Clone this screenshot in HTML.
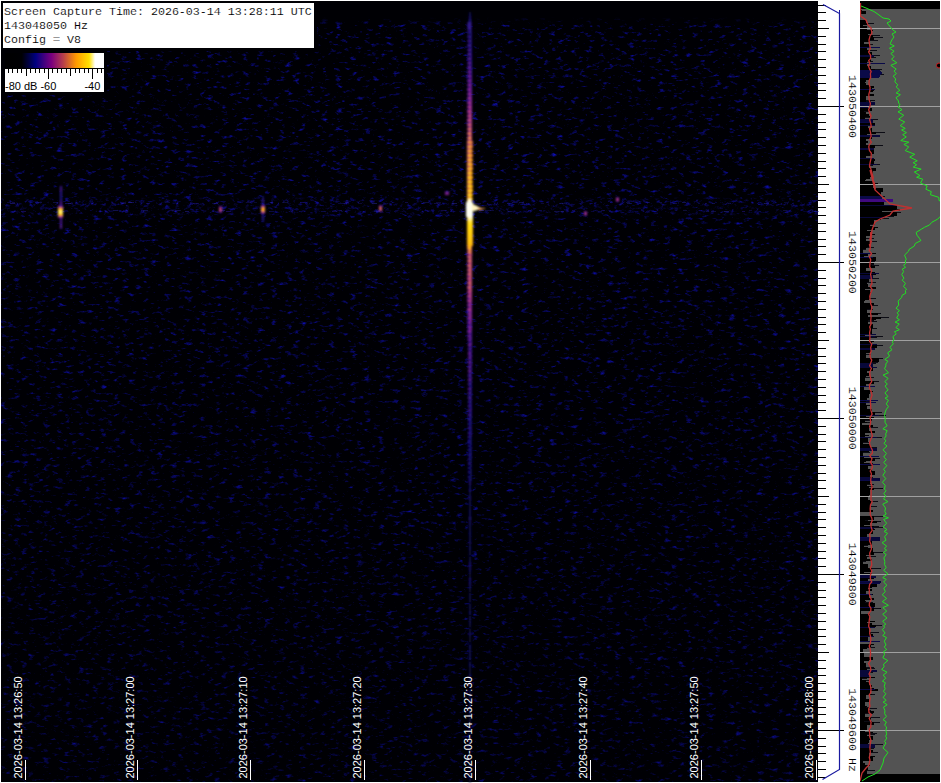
<!DOCTYPE html><html><head><meta charset="utf-8"><style>html,body{margin:0;padding:0;background:#fff;width:941px;height:783px;overflow:hidden}svg{display:block}text{white-space:pre}</style></head><body>
<svg width="941" height="783" viewBox="0 0 941 783" shape-rendering="crispEdges">
<defs>
<filter id="nz" filterUnits="userSpaceOnUse" x="1" y="1" width="817" height="781" color-interpolation-filters="sRGB"><feTurbulence type="fractalNoise" baseFrequency="0.14 0.28" numOctaves="3" seed="7" result="t"/><feColorMatrix in="t" type="matrix" values="0 0 0 0 0.06  0 0 0 0 0.06  0 0 0 0 0.78  1 0 0 0 0" result="c"/><feComponentTransfer in="c" result="d"><feFuncA type="linear" slope="2.8" intercept="-1.66"/></feComponentTransfer><feGaussianBlur in="d" stdDeviation="0.6"/></filter>
<linearGradient id="cb" x1="5" y1="0" x2="104" y2="0" gradientUnits="userSpaceOnUse"><stop offset="0" stop-color="#000"/><stop offset="0.17" stop-color="#000004"/><stop offset="0.31" stop-color="#000080"/><stop offset="0.47" stop-color="#7a007e"/><stop offset="0.59" stop-color="#b8404a"/><stop offset="0.72" stop-color="#ff9a00"/><stop offset="0.85" stop-color="#ffe000"/><stop offset="0.91" stop-color="#ffffff"/><stop offset="1" stop-color="#ffffff"/></linearGradient>
<linearGradient id="sig" x1="0" y1="12" x2="0" y2="782" gradientUnits="userSpaceOnUse">
<stop offset="0" stop-color="#10106a" stop-opacity="0.3"/>
<stop offset="0.04" stop-color="#2a1a9a" stop-opacity="0.8"/>
<stop offset="0.09" stop-color="#6a2aa8" stop-opacity="1"/>
<stop offset="0.14" stop-color="#b04a90" stop-opacity="1"/>
<stop offset="0.19" stop-color="#f08a40" stop-opacity="1"/>
<stop offset="0.23" stop-color="#ffb020" stop-opacity="1"/>
<stop offset="0.24" stop-color="#fff0c0" stop-opacity="1"/>
<stop offset="0.27" stop-color="#fff0c0" stop-opacity="1"/>
<stop offset="0.29" stop-color="#ffc030" stop-opacity="1"/>
<stop offset="0.31" stop-color="#f09a20" stop-opacity="1"/>
<stop offset="0.35" stop-color="#a04090" stop-opacity="1"/>
<stop offset="0.41" stop-color="#5a2aa0" stop-opacity="1"/>
<stop offset="0.53" stop-color="#3a20a0" stop-opacity="0.9"/>
<stop offset="0.66" stop-color="#20188a" stop-opacity="0.7"/>
<stop offset="1" stop-color="#161680" stop-opacity="0.5"/>
</linearGradient>
<radialGradient id="spot"><stop offset="0" stop-color="#ffe060"/><stop offset="0.35" stop-color="#f09020"/><stop offset="0.7" stop-color="#8030a0" stop-opacity="0.8"/><stop offset="1" stop-color="#302090" stop-opacity="0"/></radialGradient>
<radialGradient id="spot2"><stop offset="0" stop-color="#e07050"/><stop offset="0.5" stop-color="#7030a0"/><stop offset="1" stop-color="#302090" stop-opacity="0"/></radialGradient>
<filter id="bl1" x="-5%" y="-50%" width="110%" height="200%"><feGaussianBlur stdDeviation="0.6"/></filter>
<filter id="bl2" x="-50%" y="-5%" width="200%" height="110%"><feGaussianBlur stdDeviation="0.9"/></filter>
<filter id="nz2" filterUnits="userSpaceOnUse" x="1" y="197" width="817" height="19" color-interpolation-filters="sRGB"><feTurbulence type="fractalNoise" baseFrequency="0.2 0.3" numOctaves="3" seed="21" result="t"/><feColorMatrix in="t" type="matrix" values="0 0 0 0 0.1  0 0 0 0 0.08  0 0 0 0 0.8  1 0 0 0 0" result="c"/><feComponentTransfer in="c" result="d"><feFuncA type="linear" slope="3.0" intercept="-1.65"/></feComponentTransfer><feGaussianBlur in="d" stdDeviation="0.6"/></filter>
<linearGradient id="bandg" x1="0" y1="197" x2="0" y2="216" gradientUnits="userSpaceOnUse"><stop offset="0" stop-color="#fff" stop-opacity="0"/><stop offset="0.32" stop-color="#fff" stop-opacity="1"/><stop offset="0.55" stop-color="#fff" stop-opacity="0.3"/><stop offset="0.75" stop-color="#fff" stop-opacity="0.9"/><stop offset="1" stop-color="#fff" stop-opacity="0"/></linearGradient>
<mask id="bandmask" maskUnits="userSpaceOnUse" x="1" y="197" width="817" height="19"><rect x="1" y="197" width="817" height="19" fill="url(#bandg)"/></mask>
<linearGradient id="topfade" x1="0" y1="17" x2="0" y2="26" gradientUnits="userSpaceOnUse"><stop offset="0" stop-color="#000004" stop-opacity="1"/><stop offset="1" stop-color="#000004" stop-opacity="0"/></linearGradient>
<linearGradient id="nzg" x1="0" y1="1" x2="0" y2="782" gradientUnits="userSpaceOnUse"><stop offset="0" stop-color="#fff" stop-opacity="1"/><stop offset="0.25" stop-color="#fff" stop-opacity="0.95"/><stop offset="0.6" stop-color="#fff" stop-opacity="0.85"/><stop offset="1" stop-color="#fff" stop-opacity="0.7"/></linearGradient>
<mask id="nzmask" maskUnits="userSpaceOnUse" x="1" y="1" width="817" height="781"><rect x="1" y="1" width="817" height="781" fill="url(#nzg)"/></mask>
</defs>
<rect x="0" y="0" width="941" height="783" fill="#fff"/>
<rect x="1" y="1" width="817" height="781" fill="#000004"/>
<rect x="1" y="1" width="817" height="781" fill="#000" filter="url(#nz)" mask="url(#nzmask)"/>
<rect x="1" y="197" width="817" height="19" fill="#000" filter="url(#nz2)" mask="url(#bandmask)"/>
<g filter="url(#bl1)">
<rect x="340.13" y="210" width="2.04" height="1" fill="#2a20b0" opacity="0.48"/>
<rect x="220.98" y="210" width="3.74" height="1" fill="#2a2ab0" opacity="0.47"/>
<rect x="213.53" y="203" width="4.51" height="1" fill="#2a20b0" opacity="0.43"/>
<rect x="597.56" y="211" width="4.12" height="1" fill="#2020a0" opacity="0.38"/>
<rect x="121.59" y="203" width="4.88" height="1" fill="#2a20b0" opacity="0.33"/>
<rect x="374.49" y="211" width="2.11" height="1" fill="#2a2ab0" opacity="0.25"/>
<rect x="541.41" y="203" width="2.66" height="1" fill="#2a20b0" opacity="0.27"/>
<rect x="338.43" y="203" width="5.54" height="1" fill="#2020a0" opacity="0.34"/>
<rect x="782.58" y="210" width="4.38" height="1" fill="#2a2ab0" opacity="0.31"/>
<rect x="711.78" y="203" width="2.87" height="1" fill="#2a20b0" opacity="0.4"/>
<rect x="422.85" y="202" width="5.83" height="1" fill="#2a2ab0" opacity="0.33"/>
<rect x="704.74" y="203" width="2.04" height="1" fill="#2a20b0" opacity="0.38"/>
<rect x="128.78" y="202" width="3.3" height="1" fill="#2a2ab0" opacity="0.43"/>
<rect x="64.95" y="203" width="5.98" height="1" fill="#2a2ab0" opacity="0.44"/>
<rect x="300.35" y="202" width="4.71" height="1" fill="#2a20b0" opacity="0.41"/>
<rect x="12.25" y="211" width="3.97" height="1" fill="#2020a0" opacity="0.3"/>
<rect x="626.85" y="203" width="4.79" height="1" fill="#2a2ab0" opacity="0.37"/>
<rect x="727.5" y="203" width="3.34" height="1" fill="#2a2ab0" opacity="0.29"/>
<rect x="123.22" y="202" width="2.36" height="1" fill="#2a2ab0" opacity="0.25"/>
<rect x="404.8" y="202" width="2.74" height="1" fill="#2a20b0" opacity="0.38"/>
<rect x="331.6" y="211" width="5.16" height="1" fill="#2a20b0" opacity="0.3"/>
<rect x="749.01" y="210" width="2.74" height="1" fill="#2a20b0" opacity="0.29"/>
<rect x="145.77" y="203" width="4.29" height="1" fill="#2a20b0" opacity="0.38"/>
<rect x="340.87" y="211" width="2.48" height="1" fill="#2020a0" opacity="0.3"/>
<rect x="506.75" y="203" width="2.81" height="1" fill="#2020a0" opacity="0.47"/>
<rect x="269.85" y="202" width="3.17" height="1" fill="#2a20b0" opacity="0.44"/>
<rect x="36.85" y="202" width="5.2" height="1" fill="#2020a0" opacity="0.44"/>
<rect x="128.13" y="202" width="5.52" height="1" fill="#2a20b0" opacity="0.44"/>
<rect x="559.32" y="211" width="3.61" height="1" fill="#2020a0" opacity="0.32"/>
<rect x="601.1" y="210" width="3.92" height="1" fill="#2a20b0" opacity="0.26"/>
<rect x="281.89" y="202" width="5.68" height="1" fill="#2a2ab0" opacity="0.28"/>
<rect x="710.92" y="211" width="5.45" height="1" fill="#2a2ab0" opacity="0.32"/>
<rect x="170.76" y="210" width="3.2" height="1" fill="#2a20b0" opacity="0.27"/>
<rect x="245.89" y="202" width="5.14" height="1" fill="#2a20b0" opacity="0.3"/>
<rect x="67.63" y="203" width="5.27" height="1" fill="#2a20b0" opacity="0.36"/>
<rect x="12.28" y="202" width="2.45" height="1" fill="#2a20b0" opacity="0.35"/>
<rect x="706.32" y="211" width="2.97" height="1" fill="#2a2ab0" opacity="0.39"/>
<rect x="211.95" y="203" width="4.13" height="1" fill="#2020a0" opacity="0.32"/>
<rect x="698.01" y="203" width="2.37" height="1" fill="#2020a0" opacity="0.38"/>
<rect x="783.52" y="202" width="5.92" height="1" fill="#2020a0" opacity="0.29"/>
<rect x="433.74" y="203" width="4.35" height="1" fill="#2a20b0" opacity="0.35"/>
<rect x="21" y="211" width="4.65" height="1" fill="#2a20b0" opacity="0.42"/>
<rect x="441.3" y="210" width="4.38" height="1" fill="#2a20b0" opacity="0.36"/>
<rect x="260.68" y="210" width="3.56" height="1" fill="#2a2ab0" opacity="0.34"/>
<rect x="507.74" y="211" width="4.28" height="1" fill="#2a2ab0" opacity="0.27"/>
<rect x="142.73" y="210" width="5.76" height="1" fill="#2a2ab0" opacity="0.38"/>
<rect x="375.8" y="211" width="3.88" height="1" fill="#2a2ab0" opacity="0.48"/>
<rect x="269.23" y="211" width="5.14" height="1" fill="#2020a0" opacity="0.39"/>
<rect x="814.4" y="211" width="4.74" height="1" fill="#2a2ab0" opacity="0.48"/>
<rect x="451.71" y="203" width="5.72" height="1" fill="#2a2ab0" opacity="0.42"/>
<rect x="371.74" y="203" width="5.04" height="1" fill="#2a2ab0" opacity="0.45"/>
<rect x="626.19" y="202" width="4.24" height="1" fill="#2a2ab0" opacity="0.32"/>
<rect x="192.87" y="203" width="5.92" height="1" fill="#2a20b0" opacity="0.34"/>
<rect x="561.87" y="203" width="4.65" height="1" fill="#2020a0" opacity="0.36"/>
<rect x="682.39" y="202" width="4.02" height="1" fill="#2020a0" opacity="0.48"/>
<rect x="741.96" y="211" width="3.47" height="1" fill="#2a20b0" opacity="0.42"/>
<rect x="344.11" y="203" width="2.44" height="1" fill="#2a20b0" opacity="0.33"/>
<rect x="461.88" y="211" width="2.68" height="1" fill="#2a20b0" opacity="0.39"/>
<rect x="518.9" y="202" width="5.19" height="1" fill="#2020a0" opacity="0.43"/>
<rect x="225.89" y="211" width="5.23" height="1" fill="#2a20b0" opacity="0.42"/>
<rect x="165.12" y="202" width="4.5" height="1" fill="#2020a0" opacity="0.35"/>
<rect x="176.31" y="210" width="4.24" height="1" fill="#2a2ab0" opacity="0.27"/>
<rect x="647.21" y="202" width="3.01" height="1" fill="#2a2ab0" opacity="0.29"/>
<rect x="474.78" y="203" width="5.72" height="1" fill="#2a20b0" opacity="0.3"/>
<rect x="682.81" y="210" width="4.49" height="1" fill="#2a2ab0" opacity="0.3"/>
<rect x="321.16" y="211" width="4.73" height="1" fill="#2020a0" opacity="0.41"/>
<rect x="538.65" y="210" width="3.76" height="1" fill="#2020a0" opacity="0.32"/>
<rect x="60.53" y="211" width="3.91" height="1" fill="#2020a0" opacity="0.29"/>
<rect x="344.51" y="202" width="4.81" height="1" fill="#2a20b0" opacity="0.42"/>
<rect x="723.77" y="211" width="4.93" height="1" fill="#2a2ab0" opacity="0.5"/>
<rect x="561.35" y="211" width="2.48" height="1" fill="#2a2ab0" opacity="0.5"/>
<rect x="6.94" y="202" width="3.84" height="1" fill="#2a20b0" opacity="0.29"/>
<rect x="553.65" y="211" width="5.65" height="1" fill="#2a2ab0" opacity="0.33"/>
<rect x="511.59" y="202" width="3.26" height="1" fill="#2a20b0" opacity="0.31"/>
<rect x="489.84" y="210" width="3.83" height="1" fill="#2020a0" opacity="0.35"/>
<rect x="112.61" y="210" width="5.07" height="1" fill="#2020a0" opacity="0.46"/>
<rect x="673.46" y="203" width="3.19" height="1" fill="#2a20b0" opacity="0.36"/>
<rect x="10.07" y="203" width="5.02" height="1" fill="#2a20b0" opacity="0.49"/>
<rect x="184.5" y="211" width="4.03" height="1" fill="#2a20b0" opacity="0.46"/>
<rect x="485.47" y="210" width="5.52" height="1" fill="#2a2ab0" opacity="0.29"/>
<rect x="435.54" y="202" width="5.04" height="1" fill="#2a20b0" opacity="0.28"/>
<rect x="53.22" y="202" width="4.64" height="1" fill="#2a2ab0" opacity="0.33"/>
<rect x="479.36" y="210" width="4.61" height="1" fill="#2020a0" opacity="0.49"/>
<rect x="253.78" y="202" width="3.26" height="1" fill="#2020a0" opacity="0.28"/>
<rect x="357.67" y="203" width="4.57" height="1" fill="#2a20b0" opacity="0.27"/>
<rect x="558.54" y="203" width="4.69" height="1" fill="#2a2ab0" opacity="0.38"/>
<rect x="571.78" y="210" width="2.84" height="1" fill="#2a20b0" opacity="0.26"/>
<rect x="763.52" y="203" width="5.65" height="1" fill="#2020a0" opacity="0.49"/>
<rect x="659.25" y="202" width="2.56" height="1" fill="#2a2ab0" opacity="0.34"/>
<rect x="472.76" y="203" width="2.1" height="1" fill="#2020a0" opacity="0.38"/>
</g>
<rect x="1" y="1" width="817" height="16" fill="#000004"/>
<rect x="1" y="17" width="817" height="9" fill="url(#topfade)"/>
<g filter="url(#bl2)">
<rect x="468.5" y="12" width="2" height="1" fill="#0a0a3c"/>
<rect x="468.5" y="13" width="2" height="1" fill="#0c0b46"/>
<rect x="468.5" y="14" width="2" height="1" fill="#0f0c50"/>
<rect x="468.5" y="15" width="2" height="1" fill="#110d59"/>
<rect x="468.5" y="16" width="2" height="1" fill="#140f64"/>
<rect x="468.5" y="17" width="2" height="1" fill="#16106e"/>
<rect x="468.5" y="18" width="2" height="1" fill="#191178"/>
<rect x="468.5" y="19" width="2" height="1" fill="#1b1282"/>
<rect x="468.5" y="20" width="2" height="1" fill="#1e148c"/>
<rect x="468.5" y="21" width="2" height="1" fill="#1f148c"/>
<rect x="467" y="22" width="5" height="1" fill="#0a0a3f"/>
<rect x="468" y="22" width="3" height="1" fill="#2d158d"/>
<rect x="467" y="23" width="5" height="1" fill="#0b0a40"/>
<rect x="468" y="23" width="3" height="1" fill="#2e158d"/>
<rect x="467" y="24" width="5" height="1" fill="#0b0a42"/>
<rect x="468" y="24" width="3" height="1" fill="#30158d"/>
<rect x="467" y="25" width="5" height="1" fill="#0b0a43"/>
<rect x="468" y="25" width="3" height="1" fill="#31168e"/>
<rect x="467" y="26" width="5" height="1" fill="#0c0b45"/>
<rect x="468" y="26" width="3" height="1" fill="#32168e"/>
<rect x="467" y="27" width="5" height="1" fill="#0c0b47"/>
<rect x="468" y="27" width="3" height="1" fill="#34168e"/>
<rect x="467" y="28" width="5" height="1" fill="#0d0b48"/>
<rect x="468" y="28" width="3" height="1" fill="#35168e"/>
<rect x="467" y="29" width="5" height="1" fill="#0d0b4a"/>
<rect x="468" y="29" width="3" height="1" fill="#36168e"/>
<rect x="467.5" y="30" width="4" height="1" fill="#050520"/>
<rect x="469.5" y="30" width="2" height="1" fill="#0f0c53"/>
<rect x="467" y="31" width="5" height="1" fill="#090938"/>
<rect x="468" y="31" width="3" height="1" fill="#22148c"/>
<rect x="467" y="32" width="5" height="1" fill="#0e0c4d"/>
<rect x="468" y="32" width="3" height="1" fill="#39168e"/>
<rect x="467" y="33" width="5" height="1" fill="#07072f"/>
<rect x="469.5" y="33" width="2" height="1" fill="#191179"/>
<rect x="467.5" y="34" width="4" height="1" fill="#050520"/>
<rect x="469.5" y="34" width="2" height="1" fill="#0f0c52"/>
<rect x="467" y="35" width="5" height="1" fill="#080830"/>
<rect x="469.5" y="35" width="2" height="1" fill="#1a127d"/>
<rect x="467" y="36" width="5" height="1" fill="#0f0c53"/>
<rect x="468" y="36" width="3" height="1" fill="#3e178f"/>
<rect x="467" y="37" width="5" height="1" fill="#09093b"/>
<rect x="468" y="37" width="3" height="1" fill="#2a158d"/>
<rect x="467.5" y="38" width="4" height="1" fill="#060625"/>
<rect x="469.5" y="38" width="2" height="1" fill="#130e60"/>
<rect x="467.5" y="39" width="4" height="1" fill="#060629"/>
<rect x="469.5" y="39" width="2" height="1" fill="#150f6a"/>
<rect x="467" y="40" width="5" height="1" fill="#0d0b4b"/>
<rect x="468" y="40" width="3" height="1" fill="#37168e"/>
<rect x="467" y="41" width="5" height="1" fill="#100d55"/>
<rect x="468" y="41" width="3" height="1" fill="#40178f"/>
<rect x="467.5" y="42" width="4" height="1" fill="#07072f"/>
<rect x="469.5" y="42" width="2" height="1" fill="#19117b"/>
<rect x="467.5" y="43" width="4" height="1" fill="#060626"/>
<rect x="469.5" y="43" width="2" height="1" fill="#130e62"/>
<rect x="467" y="44" width="5" height="1" fill="#09093a"/>
<rect x="468" y="44" width="3" height="1" fill="#28158d"/>
<rect x="467" y="45" width="5" height="1" fill="#130e63"/>
<rect x="468" y="45" width="3" height="1" fill="#4b1890"/>
<rect x="467" y="46" width="5" height="1" fill="#0a0a3c"/>
<rect x="468" y="46" width="3" height="1" fill="#2b158d"/>
<rect x="467.5" y="47" width="4" height="1" fill="#060628"/>
<rect x="469.5" y="47" width="2" height="1" fill="#150f69"/>
<rect x="467.5" y="48" width="4" height="1" fill="#080833"/>
<rect x="469.5" y="48" width="2" height="1" fill="#1c1384"/>
<rect x="467" y="49" width="5" height="1" fill="#130e62"/>
<rect x="468" y="49" width="3" height="1" fill="#4a1890"/>
<rect x="467" y="50" width="5" height="1" fill="#110d5b"/>
<rect x="468" y="50" width="3" height="1" fill="#44178f"/>
<rect x="467.5" y="51" width="4" height="1" fill="#080830"/>
<rect x="469.5" y="51" width="2" height="1" fill="#1a127e"/>
<rect x="467.5" y="52" width="4" height="1" fill="#07072e"/>
<rect x="469.5" y="52" width="2" height="1" fill="#181176"/>
<rect x="467" y="53" width="5" height="1" fill="#100d54"/>
<rect x="468" y="53" width="3" height="1" fill="#3f178f"/>
<rect x="467" y="54" width="5" height="1" fill="#171070"/>
<rect x="468" y="54" width="3" height="1" fill="#551991"/>
<rect x="467" y="55" width="5" height="1" fill="#0a0a3d"/>
<rect x="469.5" y="55" width="2" height="1" fill="#2c158d"/>
<rect x="467.5" y="56" width="4" height="1" fill="#07072d"/>
<rect x="469.5" y="56" width="2" height="1" fill="#181175"/>
<rect x="467" y="57" width="5" height="1" fill="#0b0a40"/>
<rect x="469.5" y="57" width="2" height="1" fill="#2e158d"/>
<rect x="467" y="58" width="5" height="1" fill="#181176"/>
<rect x="468" y="58" width="3" height="1" fill="#5b1a92"/>
<rect x="467" y="59" width="5" height="1" fill="#120e5e"/>
<rect x="468" y="59" width="3" height="1" fill="#471890"/>
<rect x="467.5" y="60" width="4" height="1" fill="#080832"/>
<rect x="469.5" y="60" width="2" height="1" fill="#1b1283"/>
<rect x="467.5" y="61" width="4" height="1" fill="#090937"/>
<rect x="469.5" y="61" width="2" height="1" fill="#20148c"/>
<rect x="467" y="62" width="5" height="1" fill="#171070"/>
<rect x="468" y="62" width="3" height="1" fill="#561991"/>
<rect x="467" y="63" width="5" height="1" fill="#1a127c"/>
<rect x="468" y="63" width="3" height="1" fill="#5f1a92"/>
<rect x="467.5" y="64" width="4" height="1" fill="#0b0a42"/>
<rect x="469.5" y="64" width="2" height="1" fill="#30158d"/>
<rect x="467.5" y="65" width="4" height="1" fill="#080835"/>
<rect x="469.5" y="65" width="2" height="1" fill="#1d138b"/>
<rect x="467" y="66" width="5" height="1" fill="#130e62"/>
<rect x="468" y="66" width="3" height="1" fill="#4a1890"/>
<rect x="467" y="67" width="5" height="1" fill="#20148c"/>
<rect x="468" y="67" width="3" height="1" fill="#6e1c94"/>
<rect x="467" y="68" width="5" height="1" fill="#150f68"/>
<rect x="468" y="68" width="3" height="1" fill="#4f1991"/>
<rect x="467.5" y="69" width="4" height="1" fill="#090939"/>
<rect x="469.5" y="69" width="2" height="1" fill="#26148c"/>
<rect x="467.5" y="70" width="4" height="1" fill="#0f0c52"/>
<rect x="469.5" y="70" width="2" height="1" fill="#3d178f"/>
<rect x="467" y="71" width="5" height="1" fill="#22148c"/>
<rect x="468" y="71" width="3" height="1" fill="#711c94"/>
<rect x="467" y="72" width="5" height="1" fill="#1d138b"/>
<rect x="468" y="72" width="3" height="1" fill="#6b1b93"/>
<rect x="467.5" y="73" width="4" height="1" fill="#0e0c4f"/>
<rect x="469.5" y="73" width="2" height="1" fill="#3a168e"/>
<rect x="467.5" y="74" width="4" height="1" fill="#0d0b48"/>
<rect x="469.5" y="74" width="2" height="1" fill="#35168e"/>
<rect x="467" y="75" width="5" height="1" fill="#1c1387"/>
<rect x="468" y="75" width="3" height="1" fill="#691b93"/>
<rect x="467" y="76" width="5" height="1" fill="#32168e"/>
<rect x="468" y="76" width="3" height="1" fill="#801e95"/>
<rect x="467" y="77" width="5" height="1" fill="#171072"/>
<rect x="469.5" y="77" width="2" height="1" fill="#571991"/>
<rect x="467.5" y="78" width="4" height="1" fill="#0e0c4c"/>
<rect x="469.5" y="78" width="2" height="1" fill="#38168e"/>
<rect x="467" y="79" width="5" height="1" fill="#181177"/>
<rect x="469.5" y="79" width="2" height="1" fill="#5b1a92"/>
<rect x="467" y="80" width="5" height="1" fill="#3a168e"/>
<rect x="468" y="80" width="3" height="1" fill="#852192"/>
<rect x="467" y="81" width="5" height="1" fill="#27148c"/>
<rect x="468" y="81" width="3" height="1" fill="#761c94"/>
<rect x="467.5" y="82" width="4" height="1" fill="#120e5e"/>
<rect x="469.5" y="82" width="2" height="1" fill="#471890"/>
<rect x="467.5" y="83" width="4" height="1" fill="#150f69"/>
<rect x="469.5" y="83" width="2" height="1" fill="#501991"/>
<rect x="467" y="84" width="5" height="1" fill="#37168e"/>
<rect x="468" y="84" width="3" height="1" fill="#832093"/>
<rect x="467" y="85" width="5" height="1" fill="#41178f"/>
<rect x="468" y="85" width="3" height="1" fill="#89248f"/>
<rect x="467.5" y="86" width="4" height="1" fill="#1a127d"/>
<rect x="469.5" y="86" width="2" height="1" fill="#601a92"/>
<rect x="467.5" y="87" width="4" height="1" fill="#140f65"/>
<rect x="469.5" y="87" width="2" height="1" fill="#4d1890"/>
<rect x="467" y="88" width="5" height="1" fill="#2c158d"/>
<rect x="468" y="88" width="3" height="1" fill="#7a1d95"/>
<rect x="467" y="89" width="5" height="1" fill="#501991"/>
<rect x="468" y="89" width="3" height="1" fill="#932a89"/>
<rect x="467" y="90" width="5" height="1" fill="#30158d"/>
<rect x="468" y="90" width="3" height="1" fill="#7f1d95"/>
<rect x="467.5" y="91" width="4" height="1" fill="#171071"/>
<rect x="469.5" y="91" width="2" height="1" fill="#561991"/>
<rect x="467.5" y="92" width="4" height="1" fill="#20148c"/>
<rect x="469.5" y="92" width="2" height="1" fill="#6f1c94"/>
<rect x="467" y="93" width="5" height="1" fill="#551991"/>
<rect x="468" y="93" width="3" height="1" fill="#962c87"/>
<rect x="467" y="94" width="5" height="1" fill="#501991"/>
<rect x="468" y="94" width="3" height="1" fill="#932a89"/>
<rect x="467.5" y="95" width="4" height="1" fill="#20148c"/>
<rect x="469.5" y="95" width="2" height="1" fill="#6f1c94"/>
<rect x="467.5" y="96" width="4" height="1" fill="#1d138a"/>
<rect x="469.5" y="96" width="2" height="1" fill="#6a1b93"/>
<rect x="467" y="97" width="5" height="1" fill="#501991"/>
<rect x="468" y="97" width="3" height="1" fill="#932a89"/>
<rect x="467" y="98" width="5" height="1" fill="#691b93"/>
<rect x="468" y="98" width="3" height="1" fill="#a3347f"/>
<rect x="467" y="99" width="5" height="1" fill="#40178f"/>
<rect x="469.5" y="99" width="2" height="1" fill="#89248f"/>
<rect x="467.5" y="100" width="4" height="1" fill="#22148c"/>
<rect x="469.5" y="100" width="2" height="1" fill="#701c94"/>
<rect x="467" y="101" width="5" height="1" fill="#471890"/>
<rect x="469.5" y="101" width="2" height="1" fill="#8d268d"/>
<rect x="467" y="102" width="5" height="1" fill="#751c94"/>
<rect x="468" y="102" width="3" height="1" fill="#aa397a"/>
<rect x="467" y="103" width="5" height="1" fill="#621b93"/>
<rect x="468" y="103" width="3" height="1" fill="#9f3281"/>
<rect x="467.5" y="104" width="4" height="1" fill="#34168e"/>
<rect x="469.5" y="104" width="2" height="1" fill="#821f94"/>
<rect x="467.5" y="105" width="4" height="1" fill="#3f178f"/>
<rect x="469.5" y="105" width="2" height="1" fill="#882390"/>
<rect x="467" y="106" width="5" height="1" fill="#751c94"/>
<rect x="468" y="106" width="3" height="1" fill="#aa397a"/>
<rect x="467" y="107" width="5" height="1" fill="#7f1d95"/>
<rect x="468" y="107" width="3" height="1" fill="#b13d76"/>
<rect x="467.5" y="108" width="4" height="1" fill="#511991"/>
<rect x="469.5" y="108" width="2" height="1" fill="#942b88"/>
<rect x="467.5" y="109" width="4" height="1" fill="#3f178f"/>
<rect x="469.5" y="109" width="2" height="1" fill="#882390"/>
<rect x="467" y="110" width="5" height="1" fill="#6d1c94"/>
<rect x="468" y="110" width="3" height="1" fill="#a5367d"/>
<rect x="467" y="111" width="5" height="1" fill="#8b258e"/>
<rect x="468" y="111" width="3" height="1" fill="#bd456e"/>
<rect x="467" y="112" width="5" height="1" fill="#731c94"/>
<rect x="468" y="112" width="3" height="1" fill="#a9387b"/>
<rect x="467.5" y="113" width="4" height="1" fill="#4b1890"/>
<rect x="469.5" y="113" width="2" height="1" fill="#90288b"/>
<rect x="467.5" y="114" width="4" height="1" fill="#631b93"/>
<rect x="469.5" y="114" width="2" height="1" fill="#9f3281"/>
<rect x="467" y="115" width="5" height="1" fill="#8f278c"/>
<rect x="468" y="115" width="3" height="1" fill="#c14a68"/>
<rect x="467" y="116" width="5" height="1" fill="#8c268d"/>
<rect x="468" y="116" width="3" height="1" fill="#be466d"/>
<rect x="467.5" y="117" width="4" height="1" fill="#631b93"/>
<rect x="469.5" y="117" width="2" height="1" fill="#9f3281"/>
<rect x="467.5" y="118" width="4" height="1" fill="#5f1a92"/>
<rect x="469.5" y="118" width="2" height="1" fill="#9d3083"/>
<rect x="467" y="119" width="5" height="1" fill="#8c268d"/>
<rect x="468" y="119" width="3" height="1" fill="#be466d"/>
<rect x="467" y="120" width="5" height="1" fill="#9b2f84"/>
<rect x="468" y="120" width="3" height="1" fill="#d05e52"/>
<rect x="467" y="121" width="5" height="1" fill="#751c94"/>
<rect x="469.5" y="121" width="2" height="1" fill="#ab397a"/>
<rect x="467.5" y="122" width="4" height="1" fill="#4c1890"/>
<rect x="469.5" y="122" width="2" height="1" fill="#91288b"/>
<rect x="467" y="123" width="5" height="1" fill="#7d1d95"/>
<rect x="469.5" y="123" width="2" height="1" fill="#af3c77"/>
<rect x="467" y="124" width="5" height="1" fill="#a4357e"/>
<rect x="468" y="124" width="3" height="1" fill="#db6d41"/>
<rect x="467" y="125" width="5" height="1" fill="#952b88"/>
<rect x="468" y="125" width="3" height="1" fill="#c8545e"/>
<rect x="467.5" y="126" width="4" height="1" fill="#631b93"/>
<rect x="469.5" y="126" width="2" height="1" fill="#9f3281"/>
<rect x="467.5" y="127" width="4" height="1" fill="#701c94"/>
<rect x="469.5" y="127" width="2" height="1" fill="#a8377c"/>
<rect x="467" y="128" width="5" height="1" fill="#a4357e"/>
<rect x="468" y="128" width="3" height="1" fill="#da6c43"/>
<rect x="467" y="129" width="5" height="1" fill="#ac3a79"/>
<rect x="468" y="129" width="3" height="1" fill="#e47933"/>
<rect x="467.5" y="130" width="4" height="1" fill="#852192"/>
<rect x="469.5" y="130" width="2" height="1" fill="#b64172"/>
<rect x="467.5" y="131" width="4" height="1" fill="#6f1c94"/>
<rect x="469.5" y="131" width="2" height="1" fill="#a7377c"/>
<rect x="467" y="132" width="5" height="1" fill="#9c3083"/>
<rect x="468" y="132" width="3" height="1" fill="#d15f51"/>
<rect x="467" y="133" width="5" height="1" fill="#bb446f"/>
<rect x="468" y="133" width="3" height="1" fill="#f69119"/>
<rect x="467" y="134" width="5" height="1" fill="#a03380"/>
<rect x="468" y="134" width="3" height="1" fill="#d66748"/>
<rect x="467.5" y="135" width="4" height="1" fill="#7e1d95"/>
<rect x="469.5" y="135" width="2" height="1" fill="#b03d76"/>
<rect x="467.5" y="136" width="4" height="1" fill="#932a89"/>
<rect x="469.5" y="136" width="2" height="1" fill="#c65061"/>
<rect x="467" y="137" width="5" height="1" fill="#bf476c"/>
<rect x="468" y="137" width="3" height="1" fill="#fa9713"/>
<rect x="467" y="138" width="5" height="1" fill="#bb446f"/>
<rect x="468" y="138" width="3" height="1" fill="#f69119"/>
<rect x="467.5" y="139" width="4" height="1" fill="#92298a"/>
<rect x="469.5" y="139" width="2" height="1" fill="#c54f63"/>
<rect x="467" y="140" width="5" height="1" fill="#9e3182"/>
<rect x="469.5" y="140" width="2" height="1" fill="#c0496a"/>
<rect x="466.5" y="141" width="6" height="1" fill="#cd5a56"/>
<rect x="468" y="141" width="3" height="1" fill="#f58f1a"/>
<rect x="466.5" y="142" width="6" height="1" fill="#e57b32"/>
<rect x="468" y="142" width="3" height="1" fill="#fbab10"/>
<rect x="466.5" y="143" width="6" height="1" fill="#bc456e"/>
<rect x="469.5" y="143" width="2" height="1" fill="#e47933"/>
<rect x="467" y="144" width="5" height="1" fill="#a2347f"/>
<rect x="469.5" y="144" width="2" height="1" fill="#c54f63"/>
<rect x="466.5" y="145" width="6" height="1" fill="#c24b67"/>
<rect x="469.5" y="145" width="2" height="1" fill="#ea812b"/>
<rect x="466.5" y="146" width="6" height="1" fill="#ef8823"/>
<rect x="468" y="146" width="3" height="1" fill="#fcb50f"/>
<rect x="466.5" y="147" width="6" height="1" fill="#da6c42"/>
<rect x="468" y="147" width="3" height="1" fill="#fa9f12"/>
<rect x="467" y="148" width="5" height="1" fill="#ad3b78"/>
<rect x="469.5" y="148" width="2" height="1" fill="#d16050"/>
<rect x="467" y="149" width="5" height="1" fill="#b43f74"/>
<rect x="469.5" y="149" width="2" height="1" fill="#da6b43"/>
<rect x="466.5" y="150" width="6" height="1" fill="#e87e2e"/>
<rect x="468" y="150" width="3" height="1" fill="#fbad10"/>
<rect x="466.5" y="151" width="6" height="1" fill="#f08922"/>
<rect x="468" y="151" width="3" height="1" fill="#fcb70f"/>
<rect x="467" y="152" width="5" height="1" fill="#bf486b"/>
<rect x="469.5" y="152" width="2" height="1" fill="#e77d2f"/>
<rect x="467" y="153" width="5" height="1" fill="#ae3b78"/>
<rect x="469.5" y="153" width="2" height="1" fill="#d2614e"/>
<rect x="466.5" y="154" width="6" height="1" fill="#d86846"/>
<rect x="468" y="154" width="3" height="1" fill="#fa9c13"/>
<rect x="466.5" y="155" width="6" height="1" fill="#fa9713"/>
<rect x="468" y="155" width="3" height="1" fill="#fdc20d"/>
<rect x="466.5" y="156" width="6" height="1" fill="#da6c43"/>
<rect x="468" y="156" width="3" height="1" fill="#fa9f12"/>
<rect x="467" y="157" width="5" height="1" fill="#b23e75"/>
<rect x="469.5" y="157" width="2" height="1" fill="#d76847"/>
<rect x="467" y="158" width="5" height="1" fill="#c65161"/>
<rect x="469.5" y="158" width="2" height="1" fill="#ee8625"/>
<rect x="466.5" y="159" width="6" height="1" fill="#f99514"/>
<rect x="468" y="159" width="3" height="1" fill="#fdc10d"/>
<rect x="466.5" y="160" width="6" height="1" fill="#f38d1d"/>
<rect x="468" y="160" width="3" height="1" fill="#fcba0e"/>
<rect x="467" y="161" width="5" height="1" fill="#c0496a"/>
<rect x="469.5" y="161" width="2" height="1" fill="#e87e2e"/>
<rect x="467" y="162" width="5" height="1" fill="#ba4370"/>
<rect x="469.5" y="162" width="2" height="1" fill="#e27637"/>
<rect x="466.5" y="163" width="6" height="1" fill="#ed8526"/>
<rect x="468" y="163" width="3" height="1" fill="#fcb30f"/>
<rect x="466.5" y="164" width="6" height="1" fill="#faa112"/>
<rect x="468" y="164" width="3" height="1" fill="#fdcc0c"/>
<rect x="466.5" y="165" width="6" height="1" fill="#d96a44"/>
<rect x="469.5" y="165" width="2" height="1" fill="#fa9e12"/>
<rect x="467" y="166" width="5" height="1" fill="#b94370"/>
<rect x="469.5" y="166" width="2" height="1" fill="#e0733a"/>
<rect x="466.5" y="167" width="6" height="1" fill="#db6d41"/>
<rect x="469.5" y="167" width="2" height="1" fill="#faa012"/>
<rect x="466.5" y="168" width="6" height="1" fill="#fba611"/>
<rect x="468" y="168" width="3" height="1" fill="#fed10b"/>
<rect x="466.5" y="169" width="6" height="1" fill="#f48e1c"/>
<rect x="468" y="169" width="3" height="1" fill="#fcbb0e"/>
<rect x="467" y="170" width="5" height="1" fill="#c34d65"/>
<rect x="469.5" y="170" width="2" height="1" fill="#eb8229"/>
<rect x="467" y="171" width="5" height="1" fill="#cc5858"/>
<rect x="469.5" y="171" width="2" height="1" fill="#f48e1c"/>
<rect x="466.5" y="172" width="6" height="1" fill="#fa9e12"/>
<rect x="468" y="172" width="3" height="1" fill="#fdc90c"/>
<rect x="466.5" y="173" width="6" height="1" fill="#fba711"/>
<rect x="468" y="173" width="3" height="1" fill="#fed20b"/>
<rect x="467" y="174" width="5" height="1" fill="#d96a45"/>
<rect x="469.5" y="174" width="2" height="1" fill="#fa9d12"/>
<rect x="467" y="175" width="5" height="1" fill="#c44e64"/>
<rect x="469.5" y="175" width="2" height="1" fill="#ec8428"/>
<rect x="466.5" y="176" width="6" height="1" fill="#f18a20"/>
<rect x="468" y="176" width="3" height="1" fill="#fcb70f"/>
<rect x="466.5" y="177" width="6" height="1" fill="#fcb20f"/>
<rect x="468" y="177" width="3" height="1" fill="#ffdd10"/>
<rect x="466.5" y="178" width="6" height="1" fill="#f28c1e"/>
<rect x="468" y="178" width="3" height="1" fill="#fcb90e"/>
<rect x="467" y="179" width="5" height="1" fill="#c7525f"/>
<rect x="469.5" y="179" width="2" height="1" fill="#ef8823"/>
<rect x="467" y="180" width="5" height="1" fill="#de703d"/>
<rect x="469.5" y="180" width="2" height="1" fill="#faa312"/>
<rect x="466.5" y="181" width="6" height="1" fill="#fbae10"/>
<rect x="468" y="181" width="3" height="1" fill="#feda0a"/>
<rect x="466.5" y="182" width="6" height="1" fill="#fba711"/>
<rect x="468" y="182" width="3" height="1" fill="#fed20b"/>
<rect x="467" y="183" width="5" height="1" fill="#d66748"/>
<rect x="469.5" y="183" width="2" height="1" fill="#fa9b13"/>
<rect x="467" y="184" width="5" height="1" fill="#d05e52"/>
<rect x="469.5" y="184" width="2" height="1" fill="#f89316"/>
<rect x="466.5" y="185" width="6" height="1" fill="#fa9f12"/>
<rect x="468" y="185" width="3" height="1" fill="#fdca0c"/>
<rect x="466.5" y="186" width="6" height="1" fill="#fcb80f"/>
<rect x="468" y="186" width="3" height="1" fill="#ffe028"/>
<rect x="466.5" y="187" width="6" height="1" fill="#ee8625"/>
<rect x="469.5" y="187" width="2" height="1" fill="#fcb40f"/>
<rect x="467" y="188" width="5" height="1" fill="#cc5957"/>
<rect x="469.5" y="188" width="2" height="1" fill="#f48e1b"/>
<rect x="466.5" y="189" width="6" height="1" fill="#ef8823"/>
<rect x="469.5" y="189" width="2" height="1" fill="#fcb60f"/>
<rect x="466.5" y="190" width="6" height="1" fill="#fcbb0e"/>
<rect x="468" y="190" width="3" height="1" fill="#ffe236"/>
<rect x="466.5" y="191" width="6" height="1" fill="#fba411"/>
<rect x="468" y="191" width="3" height="1" fill="#fecf0b"/>
<rect x="467" y="192" width="5" height="1" fill="#d66649"/>
<rect x="469.5" y="192" width="2" height="1" fill="#fa9a13"/>
<rect x="467" y="193" width="5" height="1" fill="#de713d"/>
<rect x="469.5" y="193" width="2" height="1" fill="#faa312"/>
<rect x="466.5" y="194" width="6" height="1" fill="#fbb110"/>
<rect x="468" y="194" width="3" height="1" fill="#ffdc0c"/>
<rect x="466.5" y="195" width="6" height="1" fill="#fcba0e"/>
<rect x="468" y="195" width="3" height="1" fill="#ffe231"/>
<rect x="467" y="196" width="5" height="1" fill="#ef8823"/>
<rect x="469.5" y="196" width="2" height="1" fill="#fcb60f"/>
<rect x="467" y="197" width="5" height="1" fill="#e0733a"/>
<rect x="469.5" y="197" width="2" height="1" fill="#fba511"/>
<rect x="466.5" y="198" width="6" height="1" fill="#fbb010"/>
<rect x="468" y="198" width="3" height="1" fill="#fedb0a"/>
<rect x="466.5" y="199" width="6" height="1" fill="#ffdc0d"/>
<rect x="468" y="199" width="3" height="1" fill="#fff8c5"/>
<rect x="467" y="200" width="5" height="1" fill="#fece0b"/>
<rect x="468" y="200" width="3" height="1" fill="#fffde2"/>
<rect x="467" y="201" width="5" height="1" fill="#fed50a"/>
<rect x="468" y="201" width="3" height="1" fill="#fffff2"/>
<rect x="466" y="202" width="7" height="1" fill="#fffff0"/>
<rect x="466" y="203" width="7" height="1" fill="#fffff0"/>
<rect x="466" y="204" width="7" height="1" fill="#fffff0"/>
<rect x="466" y="205" width="7" height="1" fill="#fffff0"/>
<rect x="466" y="206" width="7" height="1" fill="#fffff0"/>
<rect x="466" y="207" width="7" height="1" fill="#fffff0"/>
<rect x="466" y="208" width="7" height="1" fill="#fffff0"/>
<rect x="466" y="209" width="7" height="1" fill="#fffff0"/>
<rect x="466" y="210" width="7" height="1" fill="#fffff0"/>
<rect x="466" y="211" width="7" height="1" fill="#fffff0"/>
<rect x="466" y="212" width="7" height="1" fill="#fffff0"/>
<rect x="466" y="213" width="7" height="1" fill="#fffff0"/>
<rect x="466" y="214" width="7" height="1" fill="#fffff0"/>
<rect x="466" y="215" width="7" height="1" fill="#fffff0"/>
<rect x="466" y="216" width="7" height="1" fill="#fffff0"/>
<rect x="466.5" y="217" width="6" height="1" fill="#ffe85a"/>
<rect x="467.5" y="217" width="4" height="1" fill="#fff9cd"/>
<rect x="466.5" y="218" width="6" height="1" fill="#ffe237"/>
<rect x="467.5" y="218" width="4" height="1" fill="#fff4aa"/>
<rect x="466.5" y="219" width="6" height="1" fill="#ffdd15"/>
<rect x="467.5" y="219" width="4" height="1" fill="#ffef88"/>
<rect x="466.5" y="220" width="6" height="1" fill="#fed60a"/>
<rect x="467.5" y="220" width="4" height="1" fill="#ffea66"/>
<rect x="466.5" y="221" width="6" height="1" fill="#fece0b"/>
<rect x="467.5" y="221" width="4" height="1" fill="#ffe443"/>
<rect x="466.5" y="222" width="6" height="1" fill="#fdc60d"/>
<rect x="467.5" y="222" width="4" height="1" fill="#ffdf21"/>
<rect x="466.5" y="223" width="6" height="1" fill="#fdc40d"/>
<rect x="467.5" y="223" width="4" height="1" fill="#ffde1a"/>
<rect x="466.5" y="224" width="6" height="1" fill="#fdc30d"/>
<rect x="467.5" y="224" width="4" height="1" fill="#ffdd13"/>
<rect x="466.5" y="225" width="6" height="1" fill="#fdc10d"/>
<rect x="467.5" y="225" width="4" height="1" fill="#ffdc0d"/>
<rect x="466.5" y="226" width="6" height="1" fill="#fdc00d"/>
<rect x="467.5" y="226" width="4" height="1" fill="#fedb0a"/>
<rect x="466.5" y="227" width="6" height="1" fill="#fcbe0e"/>
<rect x="467.5" y="227" width="4" height="1" fill="#fed90a"/>
<rect x="466.5" y="228" width="6" height="1" fill="#fcbd0e"/>
<rect x="467.5" y="228" width="4" height="1" fill="#fed80a"/>
<rect x="466.5" y="229" width="6" height="1" fill="#fcbb0e"/>
<rect x="467.5" y="229" width="4" height="1" fill="#fed60a"/>
<rect x="466.5" y="230" width="6" height="1" fill="#fcba0e"/>
<rect x="467.5" y="230" width="4" height="1" fill="#fed50a"/>
<rect x="466.5" y="231" width="6" height="1" fill="#fcb80f"/>
<rect x="467.5" y="231" width="4" height="1" fill="#fed30b"/>
<rect x="466.5" y="232" width="6" height="1" fill="#fcb70f"/>
<rect x="467.5" y="232" width="4" height="1" fill="#fed20b"/>
<rect x="466.5" y="233" width="6" height="1" fill="#fcb50f"/>
<rect x="467.5" y="233" width="4" height="1" fill="#fed00b"/>
<rect x="466.5" y="234" width="6" height="1" fill="#fcb40f"/>
<rect x="467.5" y="234" width="4" height="1" fill="#fece0b"/>
<rect x="466.5" y="235" width="6" height="1" fill="#fcb20f"/>
<rect x="467.5" y="235" width="4" height="1" fill="#fdcd0c"/>
<rect x="466.5" y="236" width="6" height="1" fill="#fbb010"/>
<rect x="467.5" y="236" width="4" height="1" fill="#fdcb0c"/>
<rect x="466.5" y="237" width="6" height="1" fill="#fbaf10"/>
<rect x="467.5" y="237" width="4" height="1" fill="#fdca0c"/>
<rect x="466.5" y="238" width="6" height="1" fill="#fbad10"/>
<rect x="467.5" y="238" width="4" height="1" fill="#fdc80c"/>
<rect x="466.5" y="239" width="6" height="1" fill="#fbac10"/>
<rect x="467.5" y="239" width="4" height="1" fill="#fdc70c"/>
<rect x="466.5" y="240" width="6" height="1" fill="#fbaa11"/>
<rect x="467.5" y="240" width="4" height="1" fill="#fdc50d"/>
<rect x="466.5" y="241" width="6" height="1" fill="#fba911"/>
<rect x="467.5" y="241" width="4" height="1" fill="#fdc40d"/>
<rect x="466.5" y="242" width="6" height="1" fill="#fba711"/>
<rect x="467.5" y="242" width="4" height="1" fill="#fdc20d"/>
<rect x="466.5" y="243" width="6" height="1" fill="#fba611"/>
<rect x="467.5" y="243" width="4" height="1" fill="#fdc10d"/>
<rect x="466.5" y="244" width="6" height="1" fill="#fa9f12"/>
<rect x="467.5" y="244" width="4" height="1" fill="#fcba0e"/>
<rect x="466.5" y="245" width="6" height="1" fill="#fa9913"/>
<rect x="467.5" y="245" width="4" height="1" fill="#fcb40f"/>
<rect x="467" y="246" width="5" height="1" fill="#de703d"/>
<rect x="468" y="246" width="3" height="1" fill="#fcb80f"/>
<rect x="467" y="247" width="5" height="1" fill="#d86846"/>
<rect x="468" y="247" width="3" height="1" fill="#fcb20f"/>
<rect x="467" y="248" width="5" height="1" fill="#d2604f"/>
<rect x="468" y="248" width="3" height="1" fill="#fbab10"/>
<rect x="467" y="249" width="5" height="1" fill="#cd5a57"/>
<rect x="468" y="249" width="3" height="1" fill="#fba611"/>
<rect x="467.5" y="250" width="4" height="1" fill="#ab3a79"/>
<rect x="469.5" y="250" width="2" height="1" fill="#e37835"/>
<rect x="467" y="251" width="5" height="1" fill="#a9387b"/>
<rect x="468" y="251" width="3" height="1" fill="#e17538"/>
<rect x="467" y="252" width="5" height="1" fill="#c54f63"/>
<rect x="468" y="252" width="3" height="1" fill="#fa9d12"/>
<rect x="467" y="253" width="5" height="1" fill="#a03281"/>
<rect x="469.5" y="253" width="2" height="1" fill="#d66649"/>
<rect x="467.5" y="254" width="4" height="1" fill="#862291"/>
<rect x="469.5" y="254" width="2" height="1" fill="#b84271"/>
<rect x="467" y="255" width="5" height="1" fill="#91298a"/>
<rect x="469.5" y="255" width="2" height="1" fill="#c44e64"/>
<rect x="467" y="256" width="5" height="1" fill="#9a2f84"/>
<rect x="468" y="256" width="3" height="1" fill="#cf5c54"/>
<rect x="467" y="257" width="5" height="1" fill="#ac3a79"/>
<rect x="468" y="257" width="3" height="1" fill="#e47934"/>
<rect x="467.5" y="258" width="4" height="1" fill="#821f94"/>
<rect x="469.5" y="258" width="2" height="1" fill="#b33f74"/>
<rect x="467.5" y="259" width="4" height="1" fill="#8c258e"/>
<rect x="469.5" y="259" width="2" height="1" fill="#bd456e"/>
<rect x="467" y="260" width="5" height="1" fill="#b23e75"/>
<rect x="468" y="260" width="3" height="1" fill="#ec8328"/>
<rect x="467" y="261" width="5" height="1" fill="#9f3281"/>
<rect x="468" y="261" width="3" height="1" fill="#d4644c"/>
<rect x="467.5" y="262" width="4" height="1" fill="#942b88"/>
<rect x="469.5" y="262" width="2" height="1" fill="#c8535e"/>
<rect x="467.5" y="263" width="4" height="1" fill="#882390"/>
<rect x="469.5" y="263" width="2" height="1" fill="#b94370"/>
<rect x="467" y="264" width="5" height="1" fill="#952b88"/>
<rect x="468" y="264" width="3" height="1" fill="#c8545d"/>
<rect x="467" y="265" width="5" height="1" fill="#9e3182"/>
<rect x="468" y="265" width="3" height="1" fill="#d4634c"/>
<rect x="467" y="266" width="5" height="1" fill="#a8387b"/>
<rect x="468" y="266" width="3" height="1" fill="#e0733a"/>
<rect x="467.5" y="267" width="4" height="1" fill="#7f1d95"/>
<rect x="469.5" y="267" width="2" height="1" fill="#b03d76"/>
<rect x="467.5" y="268" width="4" height="1" fill="#992e85"/>
<rect x="469.5" y="268" width="2" height="1" fill="#cd5a57"/>
<rect x="467" y="269" width="5" height="1" fill="#a03281"/>
<rect x="468" y="269" width="3" height="1" fill="#d5654a"/>
<rect x="467" y="270" width="5" height="1" fill="#9f3281"/>
<rect x="468" y="270" width="3" height="1" fill="#d4644c"/>
<rect x="467.5" y="271" width="4" height="1" fill="#9a2f84"/>
<rect x="469.5" y="271" width="2" height="1" fill="#ce5c54"/>
<rect x="467.5" y="272" width="4" height="1" fill="#821f94"/>
<rect x="469.5" y="272" width="2" height="1" fill="#b43f74"/>
<rect x="467" y="273" width="5" height="1" fill="#a5367d"/>
<rect x="468" y="273" width="3" height="1" fill="#dc6e40"/>
<rect x="467" y="274" width="5" height="1" fill="#982e85"/>
<rect x="468" y="274" width="3" height="1" fill="#cd5a57"/>
<rect x="467" y="275" width="5" height="1" fill="#9b3083"/>
<rect x="469.5" y="275" width="2" height="1" fill="#d05f51"/>
<rect x="467.5" y="276" width="4" height="1" fill="#7e1d95"/>
<rect x="469.5" y="276" width="2" height="1" fill="#b03d76"/>
<rect x="467" y="277" width="5" height="1" fill="#9a2e85"/>
<rect x="469.5" y="277" width="2" height="1" fill="#ce5b55"/>
<rect x="467" y="278" width="5" height="1" fill="#9c3083"/>
<rect x="468" y="278" width="3" height="1" fill="#d15f50"/>
<rect x="467" y="279" width="5" height="1" fill="#8a248f"/>
<rect x="468" y="279" width="3" height="1" fill="#bc446f"/>
<rect x="467.5" y="280" width="4" height="1" fill="#8a258e"/>
<rect x="469.5" y="280" width="2" height="1" fill="#bc456e"/>
<rect x="467.5" y="281" width="4" height="1" fill="#92298a"/>
<rect x="469.5" y="281" width="2" height="1" fill="#c54f63"/>
<rect x="467" y="282" width="5" height="1" fill="#9f3281"/>
<rect x="468" y="282" width="3" height="1" fill="#d5654a"/>
<rect x="467" y="283" width="5" height="1" fill="#9c3083"/>
<rect x="468" y="283" width="3" height="1" fill="#d15f50"/>
<rect x="467.5" y="284" width="4" height="1" fill="#9b2f84"/>
<rect x="469.5" y="284" width="2" height="1" fill="#d05e52"/>
<rect x="467.5" y="285" width="4" height="1" fill="#741c94"/>
<rect x="469.5" y="285" width="2" height="1" fill="#aa397a"/>
<rect x="467" y="286" width="5" height="1" fill="#962c87"/>
<rect x="468" y="286" width="3" height="1" fill="#ca565a"/>
<rect x="467" y="287" width="5" height="1" fill="#a03380"/>
<rect x="468" y="287" width="3" height="1" fill="#d66649"/>
<rect x="467" y="288" width="5" height="1" fill="#952b88"/>
<rect x="468" y="288" width="3" height="1" fill="#c8545e"/>
<rect x="467.5" y="289" width="4" height="1" fill="#711c94"/>
<rect x="469.5" y="289" width="2" height="1" fill="#a8387b"/>
<rect x="467.5" y="290" width="4" height="1" fill="#972d86"/>
<rect x="469.5" y="290" width="2" height="1" fill="#cb5859"/>
<rect x="467" y="291" width="5" height="1" fill="#8e278c"/>
<rect x="468" y="291" width="3" height="1" fill="#c0496a"/>
<rect x="467" y="292" width="5" height="1" fill="#882390"/>
<rect x="468" y="292" width="3" height="1" fill="#ba4370"/>
<rect x="467.5" y="293" width="4" height="1" fill="#6c1c94"/>
<rect x="469.5" y="293" width="2" height="1" fill="#a5367d"/>
<rect x="467.5" y="294" width="4" height="1" fill="#811f94"/>
<rect x="469.5" y="294" width="2" height="1" fill="#b33f74"/>
<rect x="467" y="295" width="5" height="1" fill="#751c94"/>
<rect x="468" y="295" width="3" height="1" fill="#aa397a"/>
<rect x="467" y="296" width="5" height="1" fill="#91298a"/>
<rect x="468" y="296" width="3" height="1" fill="#c34d65"/>
<rect x="467" y="297" width="5" height="1" fill="#701c94"/>
<rect x="469.5" y="297" width="2" height="1" fill="#a7377c"/>
<rect x="467.5" y="298" width="4" height="1" fill="#511991"/>
<rect x="469.5" y="298" width="2" height="1" fill="#942b88"/>
<rect x="467" y="299" width="5" height="1" fill="#6c1b93"/>
<rect x="469.5" y="299" width="2" height="1" fill="#a5357e"/>
<rect x="467" y="300" width="5" height="1" fill="#701c94"/>
<rect x="468" y="300" width="3" height="1" fill="#a7377c"/>
<rect x="467" y="301" width="5" height="1" fill="#832093"/>
<rect x="468" y="301" width="3" height="1" fill="#b54073"/>
<rect x="467.5" y="302" width="4" height="1" fill="#40178f"/>
<rect x="469.5" y="302" width="2" height="1" fill="#892390"/>
<rect x="467.5" y="303" width="4" height="1" fill="#3d178f"/>
<rect x="469.5" y="303" width="2" height="1" fill="#872291"/>
<rect x="467" y="304" width="5" height="1" fill="#5b1a92"/>
<rect x="468" y="304" width="3" height="1" fill="#9a2f84"/>
<rect x="467" y="305" width="5" height="1" fill="#621b93"/>
<rect x="468" y="305" width="3" height="1" fill="#9f3281"/>
<rect x="467.5" y="306" width="4" height="1" fill="#3d178f"/>
<rect x="469.5" y="306" width="2" height="1" fill="#872291"/>
<rect x="467.5" y="307" width="4" height="1" fill="#38168e"/>
<rect x="469.5" y="307" width="2" height="1" fill="#842093"/>
<rect x="467" y="308" width="5" height="1" fill="#531991"/>
<rect x="468" y="308" width="3" height="1" fill="#952b88"/>
<rect x="467" y="309" width="5" height="1" fill="#811e95"/>
<rect x="468" y="309" width="3" height="1" fill="#b23e75"/>
<rect x="467" y="310" width="5" height="1" fill="#601a92"/>
<rect x="468" y="310" width="3" height="1" fill="#9d3182"/>
<rect x="467.5" y="311" width="4" height="1" fill="#471890"/>
<rect x="469.5" y="311" width="2" height="1" fill="#8d268d"/>
<rect x="467.5" y="312" width="4" height="1" fill="#33168e"/>
<rect x="469.5" y="312" width="2" height="1" fill="#811e95"/>
<rect x="467" y="313" width="5" height="1" fill="#561991"/>
<rect x="468" y="313" width="3" height="1" fill="#972d86"/>
<rect x="467" y="314" width="5" height="1" fill="#3b178f"/>
<rect x="468" y="314" width="3" height="1" fill="#862291"/>
<rect x="467.5" y="315" width="4" height="1" fill="#4e1890"/>
<rect x="469.5" y="315" width="2" height="1" fill="#91298a"/>
<rect x="467.5" y="316" width="4" height="1" fill="#43178f"/>
<rect x="469.5" y="316" width="2" height="1" fill="#8b258e"/>
<rect x="467" y="317" width="5" height="1" fill="#531991"/>
<rect x="468" y="317" width="3" height="1" fill="#952c87"/>
<rect x="467" y="318" width="5" height="1" fill="#4f1991"/>
<rect x="468" y="318" width="3" height="1" fill="#922a89"/>
<rect x="467" y="319" width="5" height="1" fill="#33168e"/>
<rect x="469.5" y="319" width="2" height="1" fill="#801e95"/>
<rect x="467.5" y="320" width="4" height="1" fill="#3a168e"/>
<rect x="469.5" y="320" width="2" height="1" fill="#852192"/>
<rect x="467" y="321" width="5" height="1" fill="#31158d"/>
<rect x="469.5" y="321" width="2" height="1" fill="#7f1d95"/>
<rect x="467" y="322" width="5" height="1" fill="#3a168e"/>
<rect x="468" y="322" width="3" height="1" fill="#852192"/>
<rect x="467" y="323" width="5" height="1" fill="#22148c"/>
<rect x="468" y="323" width="3" height="1" fill="#701c94"/>
<rect x="467.5" y="324" width="4" height="1" fill="#171073"/>
<rect x="469.5" y="324" width="2" height="1" fill="#581991"/>
<rect x="467.5" y="325" width="4" height="1" fill="#181176"/>
<rect x="469.5" y="325" width="2" height="1" fill="#5b1a92"/>
<rect x="467" y="326" width="5" height="1" fill="#29158d"/>
<rect x="468" y="326" width="3" height="1" fill="#781d95"/>
<rect x="467" y="327" width="5" height="1" fill="#471890"/>
<rect x="468" y="327" width="3" height="1" fill="#8d268d"/>
<rect x="467.5" y="328" width="4" height="1" fill="#30158d"/>
<rect x="469.5" y="328" width="2" height="1" fill="#7e1d95"/>
<rect x="467.5" y="329" width="4" height="1" fill="#25148c"/>
<rect x="469.5" y="329" width="2" height="1" fill="#731c94"/>
<rect x="467" y="330" width="5" height="1" fill="#27148c"/>
<rect x="468" y="330" width="3" height="1" fill="#751c94"/>
<rect x="467" y="331" width="5" height="1" fill="#461890"/>
<rect x="468" y="331" width="3" height="1" fill="#8d268d"/>
<rect x="467" y="332" width="5" height="1" fill="#20148c"/>
<rect x="468" y="332" width="3" height="1" fill="#6f1c94"/>
<rect x="467.5" y="333" width="4" height="1" fill="#100d55"/>
<rect x="469.5" y="333" width="2" height="1" fill="#3f178f"/>
<rect x="467.5" y="334" width="4" height="1" fill="#130e61"/>
<rect x="469.5" y="334" width="2" height="1" fill="#491890"/>
<rect x="467" y="335" width="5" height="1" fill="#181176"/>
<rect x="468" y="335" width="3" height="1" fill="#5b1a92"/>
<rect x="467" y="336" width="5" height="1" fill="#33168e"/>
<rect x="468" y="336" width="3" height="1" fill="#811e95"/>
<rect x="467.5" y="337" width="4" height="1" fill="#0e0c4e"/>
<rect x="469.5" y="337" width="2" height="1" fill="#3a168e"/>
<rect x="467.5" y="338" width="4" height="1" fill="#191178"/>
<rect x="469.5" y="338" width="2" height="1" fill="#5c1a92"/>
<rect x="467" y="339" width="5" height="1" fill="#20148c"/>
<rect x="468" y="339" width="3" height="1" fill="#6e1c94"/>
<rect x="467.5" y="340" width="4" height="1" fill="#16106e"/>
<rect x="468" y="340" width="3" height="1" fill="#541991"/>
<rect x="467.5" y="341" width="4" height="1" fill="#0f0c52"/>
<rect x="469.5" y="341" width="2" height="1" fill="#3d178f"/>
<rect x="467.5" y="342" width="4" height="1" fill="#0f0c52"/>
<rect x="469.5" y="342" width="2" height="1" fill="#3e178f"/>
<rect x="467.5" y="343" width="4" height="1" fill="#1c1384"/>
<rect x="469.5" y="343" width="2" height="1" fill="#671b93"/>
<rect x="467.5" y="344" width="4" height="1" fill="#28158d"/>
<rect x="468" y="344" width="3" height="1" fill="#781d95"/>
<rect x="467.5" y="345" width="4" height="1" fill="#171072"/>
<rect x="468" y="345" width="3" height="1" fill="#5a1a92"/>
<rect x="467.5" y="346" width="4" height="1" fill="#100d54"/>
<rect x="469.5" y="346" width="2" height="1" fill="#42178f"/>
<rect x="467.5" y="347" width="4" height="1" fill="#0d0b48"/>
<rect x="469.5" y="347" width="2" height="1" fill="#38168e"/>
<rect x="467.5" y="348" width="4" height="1" fill="#110d5b"/>
<rect x="468" y="348" width="3" height="1" fill="#491890"/>
<rect x="467.5" y="349" width="4" height="1" fill="#110d5a"/>
<rect x="468" y="349" width="3" height="1" fill="#481890"/>
<rect x="467.5" y="350" width="4" height="1" fill="#0e0c4e"/>
<rect x="469.5" y="350" width="2" height="1" fill="#40178f"/>
<rect x="467.5" y="351" width="4" height="1" fill="#09093a"/>
<rect x="469.5" y="351" width="2" height="1" fill="#2d158d"/>
<rect x="467.5" y="352" width="4" height="1" fill="#1a127f"/>
<rect x="468" y="352" width="3" height="1" fill="#681b93"/>
<rect x="467.5" y="353" width="4" height="1" fill="#120e5c"/>
<rect x="468" y="353" width="3" height="1" fill="#4c1890"/>
<rect x="467.5" y="354" width="4" height="1" fill="#19117a"/>
<rect x="468" y="354" width="3" height="1" fill="#661b93"/>
<rect x="467.5" y="355" width="4" height="1" fill="#09093b"/>
<rect x="469.5" y="355" width="2" height="1" fill="#32168e"/>
<rect x="467.5" y="356" width="4" height="1" fill="#150f69"/>
<rect x="469.5" y="356" width="2" height="1" fill="#591a92"/>
<rect x="467.5" y="357" width="4" height="1" fill="#19117b"/>
<rect x="468" y="357" width="3" height="1" fill="#681b93"/>
<rect x="467.5" y="358" width="4" height="1" fill="#0e0c4e"/>
<rect x="468" y="358" width="3" height="1" fill="#44178f"/>
<rect x="467.5" y="359" width="4" height="1" fill="#100d54"/>
<rect x="469.5" y="359" width="2" height="1" fill="#491890"/>
<rect x="467.5" y="360" width="4" height="1" fill="#090937"/>
<rect x="469.5" y="360" width="2" height="1" fill="#2d158d"/>
<rect x="467.5" y="361" width="4" height="1" fill="#0d0b4a"/>
<rect x="468" y="361" width="3" height="1" fill="#42178f"/>
<rect x="467.5" y="362" width="4" height="1" fill="#1a127e"/>
<rect x="468" y="362" width="3" height="1" fill="#6d1c94"/>
<rect x="467.5" y="363" width="4" height="1" fill="#0b0a43"/>
<rect x="469.5" y="363" width="2" height="1" fill="#3d178f"/>
<rect x="467.5" y="364" width="4" height="1" fill="#0b0a43"/>
<rect x="469.5" y="364" width="2" height="1" fill="#3e178f"/>
<rect x="467.5" y="365" width="4" height="1" fill="#0f0c51"/>
<rect x="469.5" y="365" width="2" height="1" fill="#4a1890"/>
<rect x="467.5" y="366" width="4" height="1" fill="#0f0c50"/>
<rect x="468" y="366" width="3" height="1" fill="#4a1890"/>
<rect x="467.5" y="367" width="4" height="1" fill="#16106d"/>
<rect x="468" y="367" width="3" height="1" fill="#621a92"/>
<rect x="467.5" y="368" width="4" height="1" fill="#080835"/>
<rect x="469.5" y="368" width="2" height="1" fill="#2b158d"/>
<rect x="467.5" y="369" width="4" height="1" fill="#07072e"/>
<rect x="469.5" y="369" width="2" height="1" fill="#1d138b"/>
<rect x="467.5" y="370" width="4" height="1" fill="#120e5f"/>
<rect x="468" y="370" width="3" height="1" fill="#581a92"/>
<rect x="467.5" y="371" width="4" height="1" fill="#171070"/>
<rect x="468" y="371" width="3" height="1" fill="#671b93"/>
<rect x="467.5" y="372" width="4" height="1" fill="#0d0b4a"/>
<rect x="469.5" y="372" width="2" height="1" fill="#491890"/>
<rect x="467.5" y="373" width="4" height="1" fill="#060628"/>
<rect x="469.5" y="373" width="2" height="1" fill="#1a127f"/>
<rect x="467.5" y="374" width="4" height="1" fill="#090937"/>
<rect x="468" y="374" width="3" height="1" fill="#33168e"/>
<rect x="467.5" y="375" width="4" height="1" fill="#100d56"/>
<rect x="468" y="375" width="3" height="1" fill="#541991"/>
<rect x="467.5" y="376" width="4" height="1" fill="#080830"/>
<rect x="468" y="376" width="3" height="1" fill="#25148c"/>
<rect x="467.5" y="377" width="4" height="1" fill="#09093b"/>
<rect x="469.5" y="377" width="2" height="1" fill="#3d178f"/>
<rect x="467.5" y="378" width="4" height="1" fill="#090938"/>
<rect x="469.5" y="378" width="2" height="1" fill="#38168e"/>
<rect x="467.5" y="379" width="4" height="1" fill="#150f68"/>
<rect x="468" y="379" width="3" height="1" fill="#651b93"/>
<rect x="467.5" y="380" width="4" height="1" fill="#0b0a42"/>
<rect x="468" y="380" width="3" height="1" fill="#461890"/>
<rect x="467.5" y="381" width="4" height="1" fill="#060628"/>
<rect x="469.5" y="381" width="2" height="1" fill="#1c1384"/>
<rect x="467.5" y="382" width="4" height="1" fill="#080833"/>
<rect x="469.5" y="382" width="2" height="1" fill="#30158d"/>
<rect x="467.5" y="383" width="4" height="1" fill="#090938"/>
<rect x="468" y="383" width="3" height="1" fill="#3b178f"/>
<rect x="467.5" y="384" width="4" height="1" fill="#090936"/>
<rect x="468" y="384" width="3" height="1" fill="#38168e"/>
<rect x="467.5" y="385" width="4" height="1" fill="#07072b"/>
<rect x="469.5" y="385" width="2" height="1" fill="#1f148c"/>
<rect x="467.5" y="386" width="4" height="1" fill="#050523"/>
<rect x="469.5" y="386" width="2" height="1" fill="#191179"/>
<rect x="467.5" y="387" width="4" height="1" fill="#060628"/>
<rect x="469.5" y="387" width="2" height="1" fill="#1d1388"/>
<rect x="467.5" y="388" width="4" height="1" fill="#0e0c4d"/>
<rect x="468" y="388" width="3" height="1" fill="#541991"/>
<rect x="467.5" y="389" width="4" height="1" fill="#09093a"/>
<rect x="468" y="389" width="3" height="1" fill="#43178f"/>
<rect x="467.5" y="390" width="4" height="1" fill="#050521"/>
<rect x="469.5" y="390" width="2" height="1" fill="#181177"/>
<rect x="467.5" y="391" width="4" height="1" fill="#060629"/>
<rect x="469.5" y="391" width="2" height="1" fill="#1e148c"/>
<rect x="467.5" y="392" width="4" height="1" fill="#090937"/>
<rect x="468" y="392" width="3" height="1" fill="#3e178f"/>
<rect x="467.5" y="393" width="4" height="1" fill="#09093a"/>
<rect x="468" y="393" width="3" height="1" fill="#45178f"/>
<rect x="467.5" y="394" width="4" height="1" fill="#060629"/>
<rect x="469.5" y="394" width="2" height="1" fill="#20148c"/>
<rect x="467.5" y="395" width="4" height="1" fill="#07072e"/>
<rect x="469.5" y="395" width="2" height="1" fill="#2d158d"/>
<rect x="467.5" y="396" width="4" height="1" fill="#060624"/>
<rect x="468" y="396" width="3" height="1" fill="#1c1385"/>
<rect x="467.5" y="397" width="4" height="1" fill="#09093b"/>
<rect x="468" y="397" width="3" height="1" fill="#4a1890"/>
<rect x="467.5" y="398" width="4" height="1" fill="#080833"/>
<rect x="468" y="398" width="3" height="1" fill="#39168e"/>
<rect x="467.5" y="399" width="4" height="1" fill="#07072d"/>
<rect x="469.5" y="399" width="2" height="1" fill="#2d158d"/>
<rect x="467.5" y="400" width="4" height="1" fill="#04041d"/>
<rect x="469.5" y="400" width="2" height="1" fill="#181174"/>
<rect x="467.5" y="401" width="4" height="1" fill="#080832"/>
<rect x="468" y="401" width="3" height="1" fill="#38168e"/>
<rect x="467.5" y="402" width="4" height="1" fill="#07072c"/>
<rect x="468" y="402" width="3" height="1" fill="#2c158d"/>
<rect x="467.5" y="403" width="4" height="1" fill="#040418"/>
<rect x="469.5" y="403" width="2" height="1" fill="#150f68"/>
<rect x="467.5" y="404" width="4" height="1" fill="#060624"/>
<rect x="469.5" y="404" width="2" height="1" fill="#1d1389"/>
<rect x="467.5" y="405" width="4" height="1" fill="#080834"/>
<rect x="468" y="405" width="3" height="1" fill="#3f178f"/>
<rect x="467.5" y="406" width="4" height="1" fill="#060628"/>
<rect x="468" y="406" width="3" height="1" fill="#26148c"/>
<rect x="467.5" y="407" width="4" height="1" fill="#07072c"/>
<rect x="469.5" y="407" width="2" height="1" fill="#2e158d"/>
<rect x="467.5" y="408" width="4" height="1" fill="#04041b"/>
<rect x="469.5" y="408" width="2" height="1" fill="#171073"/>
<rect x="467.5" y="409" width="4" height="1" fill="#07072c"/>
<rect x="469.5" y="409" width="2" height="1" fill="#2f158d"/>
<rect x="467.5" y="410" width="4" height="1" fill="#090939"/>
<rect x="468" y="410" width="3" height="1" fill="#4d1890"/>
<rect x="467.5" y="411" width="4" height="1" fill="#05051f"/>
<rect x="468" y="411" width="3" height="1" fill="#1b1281"/>
<rect x="467.5" y="412" width="4" height="1" fill="#050523"/>
<rect x="469.5" y="412" width="2" height="1" fill="#1d138b"/>
<rect x="467.5" y="413" width="4" height="1" fill="#04041b"/>
<rect x="469.5" y="413" width="2" height="1" fill="#191178"/>
<rect x="467.5" y="414" width="4" height="1" fill="#080835"/>
<rect x="468" y="414" width="3" height="1" fill="#451890"/>
<rect x="467.5" y="415" width="4" height="1" fill="#07072a"/>
<rect x="468" y="415" width="3" height="1" fill="#2e158d"/>
<rect x="467.5" y="416" width="4" height="1" fill="#060629"/>
<rect x="469.5" y="416" width="2" height="1" fill="#2d158d"/>
<rect x="467.5" y="417" width="4" height="1" fill="#050520"/>
<rect x="469.5" y="417" width="2" height="1" fill="#1c1386"/>
<rect x="467.5" y="418" width="4" height="1" fill="#05051e"/>
<rect x="468" y="418" width="3" height="1" fill="#1b1282"/>
<rect x="467.5" y="419" width="4" height="1" fill="#060627"/>
<rect x="468" y="419" width="3" height="1" fill="#2a158d"/>
<rect x="467.5" y="420" width="4" height="1" fill="#050522"/>
<rect x="468" y="420" width="3" height="1" fill="#21148c"/>
<rect x="467.5" y="421" width="4" height="1" fill="#030315"/>
<rect x="469.5" y="421" width="2" height="1" fill="#150f6b"/>
<rect x="467.5" y="422" width="4" height="1" fill="#04041d"/>
<rect x="469.5" y="422" width="2" height="1" fill="#1b1283"/>
<rect x="467.5" y="423" width="4" height="1" fill="#060625"/>
<rect x="468" y="423" width="3" height="1" fill="#28158d"/>
<rect x="467.5" y="424" width="4" height="1" fill="#04041d"/>
<rect x="468" y="424" width="3" height="1" fill="#1b1283"/>
<rect x="467.5" y="425" width="4" height="1" fill="#020210"/>
<rect x="469.5" y="425" width="2" height="1" fill="#130e62"/>
<rect x="467.5" y="426" width="4" height="1" fill="#030313"/>
<rect x="469.5" y="426" width="2" height="1" fill="#150f6b"/>
<rect x="467.5" y="427" width="4" height="1" fill="#060626"/>
<rect x="468" y="427" width="3" height="1" fill="#2d158d"/>
<rect x="467.5" y="428" width="4" height="1" fill="#060626"/>
<rect x="468" y="428" width="3" height="1" fill="#2d158d"/>
<rect x="467.5" y="429" width="4" height="1" fill="#030315"/>
<rect x="469.5" y="429" width="2" height="1" fill="#171073"/>
<rect x="467.5" y="430" width="4" height="1" fill="#020211"/>
<rect x="469.5" y="430" width="2" height="1" fill="#140f67"/>
<rect x="467.5" y="431" width="4" height="1" fill="#050520"/>
<rect x="469.5" y="431" width="2" height="1" fill="#21148c"/>
<rect x="467.5" y="432" width="4" height="1" fill="#050523"/>
<rect x="468" y="432" width="3" height="1" fill="#28158d"/>
<rect x="467.5" y="433" width="4" height="1" fill="#060629"/>
<rect x="468" y="433" width="3" height="1" fill="#36168e"/>
<rect x="467.5" y="434" width="4" height="1" fill="#020211"/>
<rect x="469.5" y="434" width="2" height="1" fill="#150f69"/>
<rect x="467.5" y="435" width="4" height="1" fill="#02020c"/>
<rect x="469.5" y="435" width="2" height="1" fill="#120e5e"/>
<rect x="467.5" y="436" width="4" height="1" fill="#060627"/>
<rect x="468" y="436" width="3" height="1" fill="#33168e"/>
<rect x="467.5" y="437" width="4" height="1" fill="#04041c"/>
<rect x="468" y="437" width="3" height="1" fill="#1d138a"/>
<rect x="467.5" y="438" width="4" height="1" fill="#01010a"/>
<rect x="469.5" y="438" width="2" height="1" fill="#110d5b"/>
<rect x="467.5" y="439" width="4" height="1" fill="#000001"/>
<rect x="469.5" y="439" width="2" height="1" fill="#0c0b44"/>
<rect x="467.5" y="440" width="4" height="1" fill="#030316"/>
<rect x="468" y="440" width="3" height="1" fill="#19117b"/>
<rect x="467.5" y="441" width="4" height="1" fill="#04041d"/>
<rect x="468" y="441" width="3" height="1" fill="#22148c"/>
<rect x="467.5" y="442" width="4" height="1" fill="#04041c"/>
<rect x="468" y="442" width="3" height="1" fill="#20148c"/>
<rect x="467.5" y="443" width="4" height="1" fill="#010108"/>
<rect x="469.5" y="443" width="2" height="1" fill="#110d59"/>
<rect x="467.5" y="444" width="4" height="1" fill="#030314"/>
<rect x="469.5" y="444" width="2" height="1" fill="#191179"/>
<rect x="467.5" y="445" width="4" height="1" fill="#030314"/>
<rect x="468" y="445" width="3" height="1" fill="#19117b"/>
<rect x="467.5" y="446" width="4" height="1" fill="#030312"/>
<rect x="468" y="446" width="3" height="1" fill="#181176"/>
<rect x="467.5" y="447" width="4" height="1" fill="#020211"/>
<rect x="469.5" y="447" width="2" height="1" fill="#171073"/>
<rect x="467.5" y="448" width="4" height="1" fill="#020210"/>
<rect x="469.5" y="448" width="2" height="1" fill="#171071"/>
<rect x="467.5" y="449" width="4" height="1" fill="#030314"/>
<rect x="468" y="449" width="3" height="1" fill="#1a127c"/>
<rect x="467.5" y="450" width="4" height="1" fill="#040418"/>
<rect x="468" y="450" width="3" height="1" fill="#1d1389"/>
<rect x="467.5" y="451" width="4" height="1" fill="#02020c"/>
<rect x="469.5" y="451" width="2" height="1" fill="#150f68"/>
<rect x="467.5" y="452" width="4" height="1" fill="#000005"/>
<rect x="469.5" y="452" width="2" height="1" fill="#100d57"/>
<rect x="467.5" y="453" width="4" height="1" fill="#030314"/>
<rect x="469.5" y="453" width="2" height="1" fill="#1a127f"/>
<rect x="467.5" y="454" width="4" height="1" fill="#04041d"/>
<rect x="468" y="454" width="3" height="1" fill="#28158d"/>
<rect x="467.5" y="455" width="4" height="1" fill="#030317"/>
<rect x="468" y="455" width="3" height="1" fill="#1d1389"/>
<rect x="467.5" y="456" width="4" height="1" fill="#02020e"/>
<rect x="469.5" y="456" width="2" height="1" fill="#171071"/>
<rect x="467.5" y="457" width="4" height="1" fill="#02020e"/>
<rect x="469.5" y="457" width="2" height="1" fill="#171071"/>
<rect x="467.5" y="458" width="4" height="1" fill="#010107"/>
<rect x="468" y="458" width="3" height="1" fill="#130e61"/>
<rect x="467.5" y="459" width="4" height="1" fill="#04041b"/>
<rect x="468" y="459" width="3" height="1" fill="#27148c"/>
<rect x="467.5" y="460" width="4" height="1" fill="#000000"/>
<rect x="469.5" y="460" width="2" height="1" fill="#0e0c4f"/>
<rect x="467.5" y="461" width="4" height="1" fill="#000000"/>
<rect x="469.5" y="461" width="2" height="1" fill="#090938"/>
<rect x="467.5" y="462" width="4" height="1" fill="#010108"/>
<rect x="468" y="462" width="3" height="1" fill="#140f66"/>
<rect x="467.5" y="463" width="4" height="1" fill="#04041c"/>
<rect x="468" y="463" width="3" height="1" fill="#2b158d"/>
<rect x="467.5" y="464" width="4" height="1" fill="#000000"/>
<rect x="468" y="464" width="3" height="1" fill="#0e0c4d"/>
<rect x="467.5" y="465" width="4" height="1" fill="#000005"/>
<rect x="469.5" y="465" width="2" height="1" fill="#130e61"/>
<rect x="467.5" y="466" width="4" height="1" fill="#000000"/>
<rect x="469.5" y="466" width="2" height="1" fill="#0e0c4e"/>
<rect x="467.5" y="467" width="4" height="1" fill="#02020d"/>
<rect x="468" y="467" width="3" height="1" fill="#191178"/>
<rect x="467.5" y="468" width="4" height="1" fill="#02020d"/>
<rect x="468" y="468" width="3" height="1" fill="#191178"/>
<rect x="467.5" y="469" width="4" height="1" fill="#000000"/>
<rect x="469.5" y="469" width="2" height="1" fill="#0a0a3e"/>
<rect x="467.5" y="470" width="4" height="1" fill="#000001"/>
<rect x="469.5" y="470" width="2" height="1" fill="#110d59"/>
<rect x="467.5" y="471" width="4" height="1" fill="#000005"/>
<rect x="468" y="471" width="3" height="1" fill="#140f65"/>
<rect x="467.5" y="472" width="4" height="1" fill="#030316"/>
<rect x="468" y="472" width="3" height="1" fill="#24148c"/>
<rect x="467.5" y="473" width="4" height="1" fill="#000001"/>
<rect x="469.5" y="473" width="2" height="1" fill="#110d59"/>
<rect x="467.5" y="474" width="4" height="1" fill="#000000"/>
<rect x="469.5" y="474" width="2" height="1" fill="#090939"/>
<rect x="467.5" y="475" width="4" height="1" fill="#000000"/>
<rect x="469.5" y="475" width="2" height="1" fill="#0d0b49"/>
<rect x="467.5" y="476" width="4" height="1" fill="#02020c"/>
<rect x="468" y="476" width="3" height="1" fill="#191179"/>
<rect x="467.5" y="477" width="4" height="1" fill="#02020e"/>
<rect x="468" y="477" width="3" height="1" fill="#1b1281"/>
<rect x="467.5" y="478" width="4" height="1" fill="#000000"/>
<rect x="469.5" y="478" width="2" height="1" fill="#09093a"/>
<rect x="467.5" y="479" width="4" height="1" fill="#000003"/>
<rect x="469.5" y="479" width="2" height="1" fill="#140f65"/>
<rect x="467.5" y="480" width="4" height="1" fill="#030313"/>
<rect x="468" y="480" width="3" height="1" fill="#21148c"/>
<rect x="468.5" y="481" width="2" height="1" fill="#140f64"/>
<rect x="468.5" y="482" width="2" height="1" fill="#060628"/>
<rect x="468.5" y="483" width="2" height="1" fill="#2d158d"/>
<rect x="468.5" y="484" width="2" height="1" fill="#0c0b44"/>
<rect x="468.5" y="485" width="2" height="1" fill="#150f69"/>
<rect x="468.5" y="486" width="2" height="1" fill="#080835"/>
<rect x="468.5" y="487" width="2" height="1" fill="#060629"/>
<rect x="468.5" y="488" width="2" height="1" fill="#20148c"/>
<rect x="468.5" y="489" width="2" height="1" fill="#0c0b47"/>
<rect x="468.5" y="490" width="2" height="1" fill="#1d1389"/>
<rect x="468.5" y="491" width="2" height="1" fill="#140f65"/>
<rect x="468.5" y="492" width="2" height="1" fill="#060629"/>
<rect x="468.5" y="493" width="2" height="1" fill="#07072e"/>
<rect x="468.5" y="494" width="2" height="1" fill="#07072b"/>
<rect x="468.5" y="495" width="2" height="1" fill="#16106e"/>
<rect x="468.5" y="496" width="2" height="1" fill="#0d0b49"/>
<rect x="468.5" y="497" width="2" height="1" fill="#16106e"/>
<rect x="468.5" y="498" width="2" height="1" fill="#150f69"/>
<rect x="468.5" y="499" width="2" height="1" fill="#140f67"/>
<rect x="468.5" y="500" width="2" height="1" fill="#07072c"/>
<rect x="468.5" y="501" width="2" height="1" fill="#060625"/>
<rect x="468.5" y="502" width="2" height="1" fill="#130e60"/>
<rect x="468.5" y="503" width="2" height="1" fill="#0f0c53"/>
<rect x="468.5" y="504" width="2" height="1" fill="#150f68"/>
<rect x="468.5" y="505" width="2" height="1" fill="#080831"/>
<rect x="468.5" y="506" width="2" height="1" fill="#090936"/>
<rect x="468.5" y="507" width="2" height="1" fill="#080833"/>
<rect x="468.5" y="508" width="2" height="1" fill="#09093a"/>
<rect x="468.5" y="509" width="2" height="1" fill="#0f0c50"/>
<rect x="468.5" y="510" width="2" height="1" fill="#080835"/>
<rect x="468.5" y="511" width="2" height="1" fill="#171071"/>
<rect x="468.5" y="512" width="2" height="1" fill="#090936"/>
<rect x="468.5" y="513" width="2" height="1" fill="#150f6a"/>
<rect x="468.5" y="514" width="2" height="1" fill="#050522"/>
<rect x="468.5" y="515" width="2" height="1" fill="#16106f"/>
<rect x="468.5" y="516" width="2" height="1" fill="#07072a"/>
<rect x="468.5" y="517" width="2" height="1" fill="#1e148c"/>
<rect x="468.5" y="518" width="2" height="1" fill="#1b1281"/>
<rect x="468.5" y="519" width="2" height="1" fill="#1c1385"/>
<rect x="468.5" y="520" width="2" height="1" fill="#090938"/>
<rect x="468.5" y="521" width="2" height="1" fill="#130e61"/>
<rect x="468.5" y="522" width="2" height="1" fill="#140f64"/>
<rect x="468.5" y="523" width="2" height="1" fill="#130e63"/>
<rect x="468.5" y="524" width="2" height="1" fill="#100d55"/>
<rect x="468.5" y="525" width="2" height="1" fill="#120e5e"/>
<rect x="468.5" y="526" width="2" height="1" fill="#0a0a3c"/>
<rect x="468.5" y="527" width="2" height="1" fill="#060625"/>
<rect x="468.5" y="528" width="2" height="1" fill="#130e62"/>
<rect x="468.5" y="529" width="2" height="1" fill="#09093b"/>
<rect x="468.5" y="530" width="2" height="1" fill="#0f0c53"/>
<rect x="468.5" y="531" width="2" height="1" fill="#0f0c51"/>
<rect x="468.5" y="532" width="2" height="1" fill="#0c0b46"/>
<rect x="468.5" y="533" width="2" height="1" fill="#181176"/>
<rect x="468.5" y="534" width="2" height="1" fill="#110d59"/>
<rect x="468.5" y="535" width="2" height="1" fill="#060628"/>
<rect x="468.5" y="536" width="2" height="1" fill="#150f6a"/>
<rect x="468.5" y="537" width="2" height="1" fill="#07072b"/>
<rect x="468.5" y="538" width="2" height="1" fill="#0b0a40"/>
<rect x="468.5" y="539" width="2" height="1" fill="#120e5c"/>
<rect x="468.5" y="540" width="2" height="1" fill="#0d0b4b"/>
<rect x="468.5" y="541" width="2" height="1" fill="#0f0c50"/>
<rect x="468.5" y="542" width="2" height="1" fill="#181177"/>
<rect x="468.5" y="543" width="2" height="1" fill="#140f66"/>
<rect x="468.5" y="544" width="2" height="1" fill="#050521"/>
<rect x="468.5" y="545" width="2" height="1" fill="#080832"/>
<rect x="468.5" y="546" width="2" height="1" fill="#09093b"/>
<rect x="468.5" y="547" width="2" height="1" fill="#171072"/>
<rect x="468.5" y="548" width="2" height="1" fill="#110d5a"/>
<rect x="468.5" y="549" width="2" height="1" fill="#110d5a"/>
<rect x="468.5" y="550" width="2" height="1" fill="#0a0a3e"/>
<rect x="468.5" y="551" width="2" height="1" fill="#0b0a40"/>
<rect x="468.5" y="552" width="2" height="1" fill="#07072e"/>
<rect x="468.5" y="553" width="2" height="1" fill="#0a0a3c"/>
<rect x="468.5" y="554" width="2" height="1" fill="#100d56"/>
<rect x="468.5" y="555" width="2" height="1" fill="#060628"/>
<rect x="468.5" y="556" width="2" height="1" fill="#04041b"/>
<rect x="468.5" y="557" width="2" height="1" fill="#0e0c4f"/>
<rect x="468.5" y="558" width="2" height="1" fill="#07072a"/>
<rect x="468.5" y="559" width="2" height="1" fill="#0a0a3e"/>
<rect x="468.5" y="560" width="2" height="1" fill="#110d5b"/>
<rect x="468.5" y="561" width="2" height="1" fill="#0a0a3d"/>
<rect x="468.5" y="562" width="2" height="1" fill="#120e5d"/>
<rect x="468.5" y="563" width="2" height="1" fill="#1a127f"/>
<rect x="468.5" y="564" width="2" height="1" fill="#191178"/>
<rect x="468.5" y="565" width="2" height="1" fill="#130e63"/>
<rect x="468.5" y="566" width="2" height="1" fill="#110d5b"/>
<rect x="468.5" y="567" width="2" height="1" fill="#16106e"/>
<rect x="468.5" y="568" width="2" height="1" fill="#120e5e"/>
<rect x="468.5" y="569" width="2" height="1" fill="#090936"/>
<rect x="468.5" y="570" width="2" height="1" fill="#1c1384"/>
<rect x="468.5" y="571" width="2" height="1" fill="#0d0b49"/>
<rect x="468.5" y="572" width="2" height="1" fill="#07072b"/>
<rect x="468.5" y="573" width="2" height="1" fill="#0b0a42"/>
<rect x="468.5" y="574" width="2" height="1" fill="#090936"/>
<rect x="468.5" y="575" width="2" height="1" fill="#07072b"/>
<rect x="468.5" y="576" width="2" height="1" fill="#07072e"/>
<rect x="468.5" y="577" width="2" height="1" fill="#080835"/>
<rect x="468.5" y="578" width="2" height="1" fill="#16106f"/>
<rect x="468.5" y="579" width="2" height="1" fill="#1d138b"/>
<rect x="468.5" y="580" width="2" height="1" fill="#0d0b4a"/>
<rect x="468.5" y="581" width="2" height="1" fill="#1f148c"/>
<rect x="468.5" y="582" width="2" height="1" fill="#0b0a40"/>
<rect x="468.5" y="583" width="2" height="1" fill="#1a127c"/>
<rect x="468.5" y="584" width="2" height="1" fill="#130e62"/>
<rect x="468.5" y="585" width="2" height="1" fill="#0f0c52"/>
<rect x="468.5" y="586" width="2" height="1" fill="#140f66"/>
<rect x="468.5" y="587" width="2" height="1" fill="#080835"/>
<rect x="468.5" y="588" width="2" height="1" fill="#110d5a"/>
<rect x="468.5" y="589" width="2" height="1" fill="#080831"/>
<rect x="468.5" y="590" width="2" height="1" fill="#07072b"/>
<rect x="468.5" y="591" width="2" height="1" fill="#060628"/>
<rect x="468.5" y="592" width="2" height="1" fill="#090939"/>
<rect x="468.5" y="593" width="2" height="1" fill="#050520"/>
<rect x="468.5" y="594" width="2" height="1" fill="#0d0b4b"/>
<rect x="468.5" y="595" width="2" height="1" fill="#09093b"/>
<rect x="468.5" y="596" width="2" height="1" fill="#0d0b4a"/>
<rect x="468.5" y="597" width="2" height="1" fill="#0f0c53"/>
<rect x="468.5" y="598" width="2" height="1" fill="#080833"/>
<rect x="468.5" y="599" width="2" height="1" fill="#090936"/>
<rect x="468.5" y="600" width="2" height="1" fill="#0f0c51"/>
<rect x="468.5" y="601" width="2" height="1" fill="#090939"/>
<rect x="468.5" y="602" width="2" height="1" fill="#060624"/>
<rect x="468.5" y="603" width="2" height="1" fill="#050522"/>
<rect x="468.5" y="604" width="2" height="1" fill="#0d0b49"/>
<rect x="468.5" y="605" width="2" height="1" fill="#0a0a3d"/>
<rect x="468.5" y="606" width="2" height="1" fill="#090939"/>
<rect x="468.5" y="607" width="2" height="1" fill="#140f64"/>
<rect x="468.5" y="608" width="2" height="1" fill="#0b0a40"/>
<rect x="468.5" y="609" width="2" height="1" fill="#07072e"/>
<rect x="468.5" y="610" width="2" height="1" fill="#09093a"/>
<rect x="468.5" y="611" width="2" height="1" fill="#060625"/>
<rect x="468.5" y="612" width="2" height="1" fill="#1e148c"/>
<rect x="468.5" y="613" width="2" height="1" fill="#0e0c4f"/>
<rect x="468.5" y="614" width="2" height="1" fill="#050522"/>
<rect x="468.5" y="615" width="2" height="1" fill="#07072c"/>
<rect x="468.5" y="616" width="2" height="1" fill="#060628"/>
<rect x="468.5" y="617" width="2" height="1" fill="#0d0b4a"/>
<rect x="468.5" y="618" width="2" height="1" fill="#140f65"/>
<rect x="468.5" y="619" width="2" height="1" fill="#090937"/>
<rect x="468.5" y="620" width="2" height="1" fill="#0d0b4b"/>
<rect x="468.5" y="621" width="2" height="1" fill="#07072f"/>
<rect x="468.5" y="622" width="2" height="1" fill="#100d55"/>
<rect x="468.5" y="623" width="2" height="1" fill="#110d59"/>
<rect x="468.5" y="624" width="2" height="1" fill="#07072b"/>
<rect x="468.5" y="625" width="2" height="1" fill="#0d0b4a"/>
<rect x="468.5" y="626" width="2" height="1" fill="#080830"/>
<rect x="468.5" y="627" width="2" height="1" fill="#060627"/>
<rect x="468.5" y="628" width="2" height="1" fill="#060629"/>
<rect x="468.5" y="629" width="2" height="1" fill="#080833"/>
<rect x="468.5" y="630" width="2" height="1" fill="#07072e"/>
<rect x="468.5" y="631" width="2" height="1" fill="#090939"/>
<rect x="468.5" y="632" width="2" height="1" fill="#0a0a3c"/>
<rect x="468.5" y="633" width="2" height="1" fill="#191178"/>
<rect x="468.5" y="634" width="2" height="1" fill="#19117a"/>
<rect x="468.5" y="635" width="2" height="1" fill="#0a0a3e"/>
<rect x="468.5" y="636" width="2" height="1" fill="#080832"/>
<rect x="468.5" y="637" width="2" height="1" fill="#0a0a3e"/>
<rect x="468.5" y="638" width="2" height="1" fill="#050521"/>
<rect x="468.5" y="639" width="2" height="1" fill="#07072e"/>
<rect x="468.5" y="640" width="2" height="1" fill="#07072f"/>
<rect x="468.5" y="641" width="2" height="1" fill="#0b0a41"/>
<rect x="468.5" y="642" width="2" height="1" fill="#060629"/>
<rect x="468.5" y="643" width="2" height="1" fill="#060627"/>
<rect x="468.5" y="644" width="2" height="1" fill="#050522"/>
<rect x="468.5" y="645" width="2" height="1" fill="#140f67"/>
<rect x="468.5" y="646" width="2" height="1" fill="#110d59"/>
<rect x="468.5" y="647" width="2" height="1" fill="#181174"/>
<rect x="468.5" y="648" width="2" height="1" fill="#0f0c51"/>
<rect x="468.5" y="649" width="2" height="1" fill="#080835"/>
<rect x="468.5" y="650" width="2" height="1" fill="#0c0b44"/>
<rect x="468.5" y="651" width="2" height="1" fill="#0a0a3f"/>
<rect x="468.5" y="652" width="2" height="1" fill="#07072f"/>
<rect x="468.5" y="653" width="2" height="1" fill="#09093b"/>
<rect x="468.5" y="654" width="2" height="1" fill="#1a127f"/>
<rect x="468.5" y="655" width="2" height="1" fill="#0c0b47"/>
<rect x="468.5" y="656" width="2" height="1" fill="#060626"/>
<rect x="468.5" y="657" width="2" height="1" fill="#140f66"/>
<rect x="468.5" y="658" width="2" height="1" fill="#0b0a40"/>
<rect x="468.5" y="659" width="2" height="1" fill="#080830"/>
<rect x="468.5" y="660" width="2" height="1" fill="#060626"/>
<rect x="468.5" y="661" width="2" height="1" fill="#040419"/>
<rect x="468.5" y="662" width="2" height="1" fill="#110d5a"/>
<rect x="468.5" y="663" width="2" height="1" fill="#0a0a3e"/>
<rect x="468.5" y="664" width="2" height="1" fill="#100d54"/>
<rect x="468.5" y="665" width="2" height="1" fill="#1a127f"/>
<rect x="468.5" y="666" width="2" height="1" fill="#09093b"/>
<rect x="468.5" y="667" width="2" height="1" fill="#050521"/>
<rect x="468.5" y="668" width="2" height="1" fill="#080830"/>
<rect x="468.5" y="669" width="2" height="1" fill="#0c0b45"/>
<rect x="468.5" y="670" width="2" height="1" fill="#080835"/>
<rect x="468.5" y="671" width="2" height="1" fill="#0a0a3d"/>
<rect x="468.5" y="672" width="2" height="1" fill="#05051f"/>
<rect x="468.5" y="673" width="2" height="1" fill="#07072b"/>
<rect x="468.5" y="674" width="2" height="1" fill="#110d5a"/>
<rect x="468.5" y="675" width="2" height="1" fill="#181175"/>
<rect x="468.5" y="676" width="2" height="1" fill="#07072c"/>
<rect x="468.5" y="677" width="2" height="1" fill="#130e62"/>
<rect x="468.5" y="678" width="2" height="1" fill="#060624"/>
<rect x="468.5" y="679" width="2" height="1" fill="#140f65"/>
<rect x="468.5" y="680" width="2" height="1" fill="#110d58"/>
<rect x="468.5" y="681" width="2" height="1" fill="#090938"/>
<rect x="468.5" y="682" width="2" height="1" fill="#05051e"/>
<rect x="468.5" y="683" width="2" height="1" fill="#030316"/>
<rect x="468.5" y="684" width="2" height="1" fill="#171073"/>
<rect x="468.5" y="685" width="2" height="1" fill="#07072c"/>
<rect x="468.5" y="686" width="2" height="1" fill="#0d0b4b"/>
<rect x="468.5" y="687" width="2" height="1" fill="#07072a"/>
<rect x="468.5" y="688" width="2" height="1" fill="#050523"/>
<rect x="468.5" y="689" width="2" height="1" fill="#060627"/>
<rect x="468.5" y="690" width="2" height="1" fill="#090937"/>
<rect x="468.5" y="691" width="2" height="1" fill="#060629"/>
<rect x="468.5" y="692" width="2" height="1" fill="#090938"/>
<rect x="468.5" y="693" width="2" height="1" fill="#07072a"/>
<rect x="468.5" y="694" width="2" height="1" fill="#110d59"/>
<rect x="468.5" y="695" width="2" height="1" fill="#09093b"/>
<rect x="468.5" y="696" width="2" height="1" fill="#16106d"/>
<rect x="468.5" y="697" width="2" height="1" fill="#07072a"/>
<rect x="468.5" y="698" width="2" height="1" fill="#090937"/>
<rect x="468.5" y="699" width="2" height="1" fill="#1b1281"/>
<rect x="468.5" y="700" width="2" height="1" fill="#0b0a43"/>
<rect x="468.5" y="701" width="2" height="1" fill="#100d57"/>
<rect x="468.5" y="702" width="2" height="1" fill="#090936"/>
<rect x="468.5" y="703" width="2" height="1" fill="#0c0b46"/>
<rect x="468.5" y="704" width="2" height="1" fill="#0e0c4f"/>
<rect x="468.5" y="705" width="2" height="1" fill="#0d0b49"/>
<rect x="468.5" y="706" width="2" height="1" fill="#120e5d"/>
<rect x="468.5" y="707" width="2" height="1" fill="#0c0b45"/>
<rect x="468.5" y="708" width="2" height="1" fill="#0a0a3f"/>
<rect x="468.5" y="709" width="2" height="1" fill="#0c0b44"/>
<rect x="468.5" y="710" width="2" height="1" fill="#090937"/>
<rect x="468.5" y="711" width="2" height="1" fill="#090936"/>
<rect x="468.5" y="712" width="2" height="1" fill="#060629"/>
<rect x="468.5" y="713" width="2" height="1" fill="#1b1281"/>
<rect x="468.5" y="714" width="2" height="1" fill="#09093b"/>
<rect x="468.5" y="715" width="2" height="1" fill="#090936"/>
<rect x="468.5" y="716" width="2" height="1" fill="#05051f"/>
<rect x="468.5" y="717" width="2" height="1" fill="#09093a"/>
<rect x="468.5" y="718" width="2" height="1" fill="#04041a"/>
<rect x="468.5" y="719" width="2" height="1" fill="#0f0c50"/>
<rect x="468.5" y="720" width="2" height="1" fill="#090939"/>
<rect x="468.5" y="721" width="2" height="1" fill="#090939"/>
<rect x="468.5" y="722" width="2" height="1" fill="#07072c"/>
<rect x="468.5" y="723" width="2" height="1" fill="#0d0b48"/>
<rect x="468.5" y="724" width="2" height="1" fill="#080833"/>
<rect x="468.5" y="725" width="2" height="1" fill="#030317"/>
<rect x="468.5" y="726" width="2" height="1" fill="#050523"/>
<rect x="468.5" y="727" width="2" height="1" fill="#0a0a3d"/>
<rect x="468.5" y="728" width="2" height="1" fill="#1a127d"/>
<rect x="468.5" y="729" width="2" height="1" fill="#150f6b"/>
<rect x="468.5" y="730" width="2" height="1" fill="#07072e"/>
<rect x="468.5" y="731" width="2" height="1" fill="#090939"/>
<rect x="468.5" y="732" width="2" height="1" fill="#04041c"/>
<rect x="468.5" y="733" width="2" height="1" fill="#030313"/>
<rect x="468.5" y="734" width="2" height="1" fill="#0f0c51"/>
<rect x="468.5" y="735" width="2" height="1" fill="#090938"/>
<rect x="468.5" y="736" width="2" height="1" fill="#05051f"/>
<rect x="468.5" y="737" width="2" height="1" fill="#07072c"/>
<rect x="468.5" y="738" width="2" height="1" fill="#080835"/>
<rect x="468.5" y="739" width="2" height="1" fill="#050523"/>
<rect x="468.5" y="740" width="2" height="1" fill="#080832"/>
<rect x="468.5" y="741" width="2" height="1" fill="#150f6b"/>
<rect x="468.5" y="742" width="2" height="1" fill="#0b0a42"/>
<rect x="468.5" y="743" width="2" height="1" fill="#130e63"/>
<rect x="468.5" y="744" width="2" height="1" fill="#050520"/>
<rect x="468.5" y="745" width="2" height="1" fill="#080831"/>
<rect x="468.5" y="746" width="2" height="1" fill="#05051e"/>
<rect x="468.5" y="747" width="2" height="1" fill="#060624"/>
<rect x="468.5" y="748" width="2" height="1" fill="#150f69"/>
<rect x="468.5" y="749" width="2" height="1" fill="#080830"/>
<rect x="468.5" y="750" width="2" height="1" fill="#0f0c53"/>
<rect x="468.5" y="751" width="2" height="1" fill="#080832"/>
<rect x="468.5" y="752" width="2" height="1" fill="#04041d"/>
<rect x="468.5" y="753" width="2" height="1" fill="#09093b"/>
<rect x="468.5" y="754" width="2" height="1" fill="#05051e"/>
<rect x="468.5" y="755" width="2" height="1" fill="#080830"/>
<rect x="468.5" y="756" width="2" height="1" fill="#050521"/>
<rect x="468.5" y="757" width="2" height="1" fill="#05051e"/>
<rect x="468.5" y="758" width="2" height="1" fill="#060628"/>
<rect x="468.5" y="759" width="2" height="1" fill="#080835"/>
<rect x="468.5" y="760" width="2" height="1" fill="#060628"/>
<rect x="468.5" y="761" width="2" height="1" fill="#090937"/>
<rect x="468.5" y="762" width="2" height="1" fill="#060629"/>
<rect x="468.5" y="763" width="2" height="1" fill="#130e60"/>
<rect x="468.5" y="764" width="2" height="1" fill="#07072f"/>
<rect x="468.5" y="765" width="2" height="1" fill="#09093b"/>
<rect x="468.5" y="766" width="2" height="1" fill="#0f0c51"/>
<rect x="468.5" y="767" width="2" height="1" fill="#020211"/>
<rect x="468.5" y="768" width="2" height="1" fill="#09093a"/>
<rect x="468.5" y="769" width="2" height="1" fill="#030317"/>
<rect x="468.5" y="770" width="2" height="1" fill="#060627"/>
<rect x="468.5" y="771" width="2" height="1" fill="#130e61"/>
<rect x="468.5" y="772" width="2" height="1" fill="#060626"/>
<rect x="468.5" y="773" width="2" height="1" fill="#110d58"/>
<rect x="468.5" y="774" width="2" height="1" fill="#150f6a"/>
<rect x="468.5" y="775" width="2" height="1" fill="#060627"/>
<rect x="468.5" y="776" width="2" height="1" fill="#09093b"/>
<rect x="468.5" y="777" width="2" height="1" fill="#060629"/>
<rect x="468.5" y="778" width="2" height="1" fill="#100d55"/>
<rect x="468.5" y="779" width="2" height="1" fill="#05051e"/>
<rect x="468.5" y="780" width="2" height="1" fill="#0b0a41"/>
<rect x="468.5" y="781" width="2" height="1" fill="#090936"/>
<path d="M472 203.5 L482 208.5 L472 212 Z" fill="#fff4c0"/>
<path d="M478 207.3 L487 208.8 L478 210.2 Z" fill="#f0a040"/>
</g>
<g filter="url(#bl2)">
<rect x="59.5" y="186" width="2" height="1" fill="#461890"/>
<rect x="59.5" y="187" width="2" height="1" fill="#1d1389"/>
<rect x="59.5" y="188" width="2" height="1" fill="#31168e"/>
<rect x="59.5" y="189" width="2" height="1" fill="#5e1a92"/>
<rect x="59.5" y="190" width="2" height="1" fill="#1d138b"/>
<rect x="59.5" y="191" width="2" height="1" fill="#33168e"/>
<rect x="59.5" y="192" width="2" height="1" fill="#2b158d"/>
<rect x="59.5" y="193" width="2" height="1" fill="#27148c"/>
<rect x="59.5" y="194" width="2" height="1" fill="#26148c"/>
<rect x="59.5" y="195" width="2" height="1" fill="#26148c"/>
<rect x="59.5" y="196" width="2" height="1" fill="#1b1281"/>
<rect x="59.5" y="197" width="2" height="1" fill="#1c1384"/>
<rect x="59.5" y="198" width="2" height="1" fill="#2c158d"/>
<rect x="59.5" y="199" width="2" height="1" fill="#1b1282"/>
<rect x="59.5" y="200" width="2" height="1" fill="#21148c"/>
<rect x="59.5" y="201" width="2" height="1" fill="#3b168e"/>
<rect x="59.5" y="202" width="2" height="1" fill="#42178f"/>
<rect x="59.5" y="203" width="2" height="1" fill="#641b93"/>
<rect x="59.5" y="204" width="2" height="1" fill="#39168e"/>
<rect x="59.5" y="205" width="2" height="1" fill="#1b1283"/>
<rect x="59.5" y="206" width="2" height="1" fill="#541991"/>
<rect x="59.5" y="207" width="2" height="1" fill="#1b1282"/>
<rect x="59.5" y="208" width="2" height="1" fill="#25148c"/>
<rect x="59.5" y="209" width="2" height="1" fill="#22148c"/>
<rect x="59.5" y="210" width="2" height="1" fill="#521991"/>
<rect x="59.5" y="211" width="2" height="1" fill="#1d138b"/>
<rect x="59.5" y="212" width="2" height="1" fill="#28158d"/>
<rect x="59.5" y="213" width="2" height="1" fill="#581991"/>
<rect x="59.5" y="214" width="2" height="1" fill="#42178f"/>
<rect x="59.5" y="215" width="2" height="1" fill="#551991"/>
<rect x="59.5" y="216" width="2" height="1" fill="#1b1280"/>
<rect x="59.5" y="217" width="2" height="1" fill="#42178f"/>
<rect x="59.5" y="218" width="2" height="1" fill="#1d1388"/>
<rect x="59.5" y="219" width="2" height="1" fill="#641b93"/>
<rect x="59.5" y="220" width="2" height="1" fill="#1c1385"/>
<rect x="59.5" y="221" width="2" height="1" fill="#39168e"/>
<rect x="59.5" y="222" width="2" height="1" fill="#5e1a92"/>
<rect x="59.5" y="223" width="2" height="1" fill="#43178f"/>
<rect x="59.5" y="224" width="2" height="1" fill="#27158d"/>
<rect x="59.5" y="225" width="2" height="1" fill="#5d1a92"/>
<rect x="59.5" y="226" width="2" height="1" fill="#641b93"/>
<rect x="59.5" y="227" width="2" height="1" fill="#511991"/>
<rect x="59.5" y="228" width="2" height="1" fill="#21148c"/>
<rect x="58" y="205" width="5" height="1" fill="#1e148c"/>
<rect x="58" y="206" width="5" height="1" fill="#5c1a92"/>
<rect x="58" y="207" width="5" height="1" fill="#ae3c78"/>
<rect x="58" y="208" width="5" height="1" fill="#ed8526"/>
<rect x="58" y="209" width="5" height="1" fill="#fcbe0e"/>
<rect x="58" y="210" width="5" height="1" fill="#ffe026"/>
<rect x="58" y="211" width="5" height="1" fill="#ffec73"/>
<rect x="58" y="212" width="5" height="1" fill="#ffec73"/>
<rect x="58" y="213" width="5" height="1" fill="#ffe026"/>
<rect x="58" y="214" width="5" height="1" fill="#fcbe0e"/>
<rect x="58" y="215" width="5" height="1" fill="#ed8526"/>
<rect x="58" y="216" width="5" height="1" fill="#ae3c78"/>
<rect x="58" y="217" width="5" height="1" fill="#5c1a92"/>
<rect x="261.5" y="196" width="2" height="1" fill="#0f0c50"/>
<rect x="261.5" y="197" width="2" height="1" fill="#1b1283"/>
<rect x="261.5" y="198" width="2" height="1" fill="#100d55"/>
<rect x="261.5" y="199" width="2" height="1" fill="#150f6b"/>
<rect x="261.5" y="200" width="2" height="1" fill="#37168e"/>
<rect x="261.5" y="201" width="2" height="1" fill="#28158d"/>
<rect x="261.5" y="202" width="2" height="1" fill="#16106d"/>
<rect x="261.5" y="203" width="2" height="1" fill="#26148c"/>
<rect x="261.5" y="204" width="2" height="1" fill="#1b1280"/>
<rect x="261.5" y="205" width="2" height="1" fill="#0e0c4d"/>
<rect x="261.5" y="206" width="2" height="1" fill="#1a127c"/>
<rect x="261.5" y="207" width="2" height="1" fill="#0e0c4c"/>
<rect x="261.5" y="208" width="2" height="1" fill="#0f0c52"/>
<rect x="261.5" y="209" width="2" height="1" fill="#100d56"/>
<rect x="261.5" y="210" width="2" height="1" fill="#181177"/>
<rect x="261.5" y="211" width="2" height="1" fill="#25148c"/>
<rect x="261.5" y="212" width="2" height="1" fill="#181175"/>
<rect x="261.5" y="213" width="2" height="1" fill="#181177"/>
<rect x="261.5" y="214" width="2" height="1" fill="#150f68"/>
<rect x="261.5" y="215" width="2" height="1" fill="#140f65"/>
<rect x="261.5" y="216" width="2" height="1" fill="#25148c"/>
<rect x="261.5" y="217" width="2" height="1" fill="#2f158d"/>
<rect x="261.5" y="218" width="2" height="1" fill="#1b1280"/>
<rect x="261.5" y="219" width="2" height="1" fill="#150f68"/>
<rect x="261.5" y="220" width="2" height="1" fill="#1b1281"/>
<rect x="261.5" y="221" width="2" height="1" fill="#19117a"/>
<rect x="260.5" y="205" width="4" height="1" fill="#1e148c"/>
<rect x="260.5" y="206" width="4" height="1" fill="#952b88"/>
<rect x="260.5" y="207" width="4" height="1" fill="#d4644c"/>
<rect x="260.5" y="208" width="4" height="1" fill="#fa9c13"/>
<rect x="260.5" y="209" width="4" height="1" fill="#fbab10"/>
<rect x="260.5" y="210" width="4" height="1" fill="#fa9c13"/>
<rect x="260.5" y="211" width="4" height="1" fill="#d4644c"/>
<rect x="260.5" y="212" width="4" height="1" fill="#952b88"/>
<rect x="260.5" y="213" width="4" height="1" fill="#1e148c"/>
<rect x="218.5" y="206" width="3" height="1" fill="#1e148c"/>
<rect x="218.5" y="207" width="3" height="1" fill="#862291"/>
<rect x="218.5" y="208" width="3" height="1" fill="#b03d76"/>
<rect x="218.5" y="209" width="3" height="1" fill="#be466e"/>
<rect x="218.5" y="210" width="3" height="1" fill="#b03d76"/>
<rect x="218.5" y="211" width="3" height="1" fill="#862291"/>
<rect x="218.5" y="212" width="3" height="1" fill="#1e148c"/>
<rect x="378.5" y="205" width="3" height="1" fill="#1e148c"/>
<rect x="378.5" y="206" width="3" height="1" fill="#942b88"/>
<rect x="378.5" y="207" width="3" height="1" fill="#c8535e"/>
<rect x="378.5" y="208" width="3" height="1" fill="#dc6e40"/>
<rect x="378.5" y="209" width="3" height="1" fill="#c8535e"/>
<rect x="378.5" y="210" width="3" height="1" fill="#942b88"/>
<rect x="378.5" y="211" width="3" height="1" fill="#1e148c"/>
<rect x="583.5" y="211" width="3" height="1" fill="#1e148c"/>
<rect x="583.5" y="212" width="3" height="1" fill="#8f288c"/>
<rect x="583.5" y="213" width="3" height="1" fill="#a9387b"/>
<rect x="583.5" y="214" width="3" height="1" fill="#8f288c"/>
<rect x="583.5" y="215" width="3" height="1" fill="#1e148c"/>
<rect x="615.5" y="197" width="3" height="1" fill="#1e148c"/>
<rect x="615.5" y="198" width="3" height="1" fill="#8f288c"/>
<rect x="615.5" y="199" width="3" height="1" fill="#a9387b"/>
<rect x="615.5" y="200" width="3" height="1" fill="#8f288c"/>
<rect x="615.5" y="201" width="3" height="1" fill="#1e148c"/>
<rect x="445" y="191" width="4" height="1" fill="#1e148c"/>
<rect x="445" y="192" width="4" height="1" fill="#661b93"/>
<rect x="445" y="193" width="4" height="1" fill="#942b88"/>
<rect x="445" y="194" width="4" height="1" fill="#661b93"/>
</g>
<rect x="1" y="1" width="316" height="50" fill="#000004"/>
<rect x="3" y="3" width="311" height="45" fill="#fff"/>
<g font-family="Liberation Mono" font-size="11.67" fill="#000" stroke="#fff" stroke-width="0.12" shape-rendering="geometricPrecision">
<text x="4" y="15">Screen Capture Time: 2026-03-14 13:28:11 UTC</text>
<text x="4" y="29">143048050 Hz</text>
<text x="4" y="43">Config = V8</text>
</g>
<rect x="1" y="50" width="106" height="45" fill="#000004"/>
<rect x="5" y="53" width="99" height="39" fill="#fff"/>
<rect x="5" y="53" width="99" height="15" fill="url(#cb)"/>
<rect x="5" y="68" width="99" height="1" fill="#000"/>
<rect x="8" y="68" width="1" height="5" fill="#000"/>
<rect x="12" y="68" width="1" height="5" fill="#000"/>
<rect x="17" y="68" width="1" height="5" fill="#000"/>
<rect x="21" y="68" width="1" height="5" fill="#000"/>
<rect x="26" y="68" width="1" height="8" fill="#000"/>
<rect x="30" y="68" width="1" height="5" fill="#000"/>
<rect x="35" y="68" width="1" height="5" fill="#000"/>
<rect x="39" y="68" width="1" height="5" fill="#000"/>
<rect x="44" y="68" width="1" height="5" fill="#000"/>
<rect x="48" y="68" width="1" height="11" fill="#000"/>
<rect x="52" y="68" width="1" height="5" fill="#000"/>
<rect x="57" y="68" width="1" height="5" fill="#000"/>
<rect x="61" y="68" width="1" height="5" fill="#000"/>
<rect x="66" y="68" width="1" height="5" fill="#000"/>
<rect x="70" y="68" width="1" height="8" fill="#000"/>
<rect x="75" y="68" width="1" height="5" fill="#000"/>
<rect x="79" y="68" width="1" height="5" fill="#000"/>
<rect x="84" y="68" width="1" height="5" fill="#000"/>
<rect x="88" y="68" width="1" height="5" fill="#000"/>
<rect x="92" y="68" width="1" height="11" fill="#000"/>
<rect x="97" y="68" width="1" height="5" fill="#000"/>
<rect x="101" y="68" width="1" height="5" fill="#000"/>
<g font-family="Liberation Sans" font-size="11" fill="#000" shape-rendering="geometricPrecision">
<text x="5" y="89.5">-80 dB</text>
<text x="48.4" y="89.5" text-anchor="middle">-60</text>
<text x="92.4" y="89.5" text-anchor="middle">-40</text>
</g>
<g font-family="Liberation Sans" font-size="11" fill="#fff" shape-rendering="geometricPrecision">
<text transform="translate(22,778.5) rotate(-90)" x="0" y="0">2026-03-14 13:26:50</text>
<text transform="translate(134,778.5) rotate(-90)" x="0" y="0">2026-03-14 13:27:00</text>
<text transform="translate(247,778.5) rotate(-90)" x="0" y="0">2026-03-14 13:27:10</text>
<text transform="translate(361,778.5) rotate(-90)" x="0" y="0">2026-03-14 13:27:20</text>
<text transform="translate(472,778.5) rotate(-90)" x="0" y="0">2026-03-14 13:27:30</text>
<text transform="translate(587,778.5) rotate(-90)" x="0" y="0">2026-03-14 13:27:40</text>
<text transform="translate(698,778.5) rotate(-90)" x="0" y="0">2026-03-14 13:27:50</text>
<text transform="translate(813,778.5) rotate(-90)" x="0" y="0">2026-03-14 13:28:00</text>
</g>
<rect x="25" y="760" width="1" height="20" fill="#fff"/>
<rect x="137" y="760" width="1" height="20" fill="#fff"/>
<rect x="250" y="760" width="1" height="20" fill="#fff"/>
<rect x="364" y="760" width="1" height="20" fill="#fff"/>
<rect x="475" y="760" width="1" height="20" fill="#fff"/>
<rect x="590" y="760" width="1" height="20" fill="#fff"/>
<rect x="701" y="760" width="1" height="20" fill="#fff"/>
<rect x="816" y="760" width="1" height="20" fill="#fff"/>
<rect x="818" y="5" width="8" height="1" fill="#000"/>
<rect x="818" y="12" width="8" height="1" fill="#000"/>
<rect x="818" y="20" width="8" height="1" fill="#000"/>
<rect x="818" y="28" width="11" height="1" fill="#000"/>
<rect x="818" y="36" width="8" height="1" fill="#000"/>
<rect x="818" y="44" width="8" height="1" fill="#000"/>
<rect x="818" y="51" width="8" height="1" fill="#000"/>
<rect x="818" y="59" width="8" height="1" fill="#000"/>
<rect x="818" y="67" width="8" height="1" fill="#000"/>
<rect x="818" y="75" width="8" height="1" fill="#000"/>
<rect x="818" y="83" width="8" height="1" fill="#000"/>
<rect x="818" y="90" width="8" height="1" fill="#000"/>
<rect x="818" y="98" width="8" height="1" fill="#000"/>
<rect x="818" y="106" width="26" height="1" fill="#000"/>
<rect x="818" y="114" width="8" height="1" fill="#000"/>
<rect x="818" y="122" width="8" height="1" fill="#000"/>
<rect x="818" y="129" width="8" height="1" fill="#000"/>
<rect x="818" y="137" width="8" height="1" fill="#000"/>
<rect x="818" y="145" width="8" height="1" fill="#000"/>
<rect x="818" y="153" width="8" height="1" fill="#000"/>
<rect x="818" y="161" width="8" height="1" fill="#000"/>
<rect x="818" y="168" width="8" height="1" fill="#000"/>
<rect x="818" y="176" width="8" height="1" fill="#000"/>
<rect x="818" y="184" width="11" height="1" fill="#000"/>
<rect x="818" y="192" width="8" height="1" fill="#000"/>
<rect x="818" y="200" width="8" height="1" fill="#000"/>
<rect x="818" y="207" width="8" height="1" fill="#000"/>
<rect x="818" y="215" width="8" height="1" fill="#000"/>
<rect x="818" y="223" width="8" height="1" fill="#000"/>
<rect x="818" y="231" width="8" height="1" fill="#000"/>
<rect x="818" y="239" width="8" height="1" fill="#000"/>
<rect x="818" y="246" width="8" height="1" fill="#000"/>
<rect x="818" y="254" width="8" height="1" fill="#000"/>
<rect x="818" y="262" width="26" height="1" fill="#000"/>
<rect x="818" y="270" width="8" height="1" fill="#000"/>
<rect x="818" y="278" width="8" height="1" fill="#000"/>
<rect x="818" y="285" width="8" height="1" fill="#000"/>
<rect x="818" y="293" width="8" height="1" fill="#000"/>
<rect x="818" y="301" width="8" height="1" fill="#000"/>
<rect x="818" y="309" width="8" height="1" fill="#000"/>
<rect x="818" y="317" width="8" height="1" fill="#000"/>
<rect x="818" y="324" width="8" height="1" fill="#000"/>
<rect x="818" y="332" width="8" height="1" fill="#000"/>
<rect x="818" y="340" width="11" height="1" fill="#000"/>
<rect x="818" y="348" width="8" height="1" fill="#000"/>
<rect x="818" y="356" width="8" height="1" fill="#000"/>
<rect x="818" y="363" width="8" height="1" fill="#000"/>
<rect x="818" y="371" width="8" height="1" fill="#000"/>
<rect x="818" y="379" width="8" height="1" fill="#000"/>
<rect x="818" y="387" width="8" height="1" fill="#000"/>
<rect x="818" y="395" width="8" height="1" fill="#000"/>
<rect x="818" y="402" width="8" height="1" fill="#000"/>
<rect x="818" y="410" width="8" height="1" fill="#000"/>
<rect x="818" y="418" width="26" height="1" fill="#000"/>
<rect x="818" y="426" width="8" height="1" fill="#000"/>
<rect x="818" y="434" width="8" height="1" fill="#000"/>
<rect x="818" y="441" width="8" height="1" fill="#000"/>
<rect x="818" y="449" width="8" height="1" fill="#000"/>
<rect x="818" y="457" width="8" height="1" fill="#000"/>
<rect x="818" y="465" width="8" height="1" fill="#000"/>
<rect x="818" y="473" width="8" height="1" fill="#000"/>
<rect x="818" y="480" width="8" height="1" fill="#000"/>
<rect x="818" y="488" width="8" height="1" fill="#000"/>
<rect x="818" y="496" width="11" height="1" fill="#000"/>
<rect x="818" y="504" width="8" height="1" fill="#000"/>
<rect x="818" y="512" width="8" height="1" fill="#000"/>
<rect x="818" y="519" width="8" height="1" fill="#000"/>
<rect x="818" y="527" width="8" height="1" fill="#000"/>
<rect x="818" y="535" width="8" height="1" fill="#000"/>
<rect x="818" y="543" width="8" height="1" fill="#000"/>
<rect x="818" y="551" width="8" height="1" fill="#000"/>
<rect x="818" y="558" width="8" height="1" fill="#000"/>
<rect x="818" y="566" width="8" height="1" fill="#000"/>
<rect x="818" y="574" width="26" height="1" fill="#000"/>
<rect x="818" y="582" width="8" height="1" fill="#000"/>
<rect x="818" y="590" width="8" height="1" fill="#000"/>
<rect x="818" y="597" width="8" height="1" fill="#000"/>
<rect x="818" y="605" width="8" height="1" fill="#000"/>
<rect x="818" y="613" width="8" height="1" fill="#000"/>
<rect x="818" y="621" width="8" height="1" fill="#000"/>
<rect x="818" y="629" width="8" height="1" fill="#000"/>
<rect x="818" y="636" width="8" height="1" fill="#000"/>
<rect x="818" y="644" width="8" height="1" fill="#000"/>
<rect x="818" y="652" width="11" height="1" fill="#000"/>
<rect x="818" y="660" width="8" height="1" fill="#000"/>
<rect x="818" y="668" width="8" height="1" fill="#000"/>
<rect x="818" y="675" width="8" height="1" fill="#000"/>
<rect x="818" y="683" width="8" height="1" fill="#000"/>
<rect x="818" y="691" width="8" height="1" fill="#000"/>
<rect x="818" y="699" width="8" height="1" fill="#000"/>
<rect x="818" y="707" width="8" height="1" fill="#000"/>
<rect x="818" y="714" width="8" height="1" fill="#000"/>
<rect x="818" y="722" width="8" height="1" fill="#000"/>
<rect x="818" y="730" width="26" height="1" fill="#000"/>
<rect x="818" y="738" width="8" height="1" fill="#000"/>
<rect x="818" y="746" width="8" height="1" fill="#000"/>
<rect x="818" y="753" width="8" height="1" fill="#000"/>
<rect x="818" y="761" width="8" height="1" fill="#000"/>
<rect x="818" y="769" width="8" height="1" fill="#000"/>
<rect x="818" y="777" width="8" height="1" fill="#000"/>
<polyline points="823,4.5 839.5,13.5 839.5,769.5 822.5,779.5" fill="none" stroke="#1a1aa0" stroke-width="1.2" shape-rendering="geometricPrecision"/>
<rect x="839" y="10" width="1" height="4" fill="#1a1aa0"/>
<g font-family="Liberation Mono" font-size="11.67" fill="#000" stroke="#fff" stroke-width="0.12" shape-rendering="geometricPrecision">
<text transform="translate(849,106.5) rotate(90)" x="0" y="0" text-anchor="middle">143050400</text>
<text transform="translate(849,262.4) rotate(90)" x="0" y="0" text-anchor="middle">143050200</text>
<text transform="translate(849,418.3) rotate(90)" x="0" y="0" text-anchor="middle">143050000</text>
<text transform="translate(849,574.2) rotate(90)" x="0" y="0" text-anchor="middle">143049800</text>
<text transform="translate(849,730.1) rotate(90)" x="0" y="0" text-anchor="middle">143049600 Hz</text>
</g>
<rect x="860" y="1" width="80" height="781" fill="#535353"/>
<rect x="860" y="1" width="80" height="8" fill="#000"/>
<rect x="860" y="774" width="80" height="8" fill="#000"/>
<rect x="860" y="10" width="2" height="1" fill="#000"/>
<rect x="860" y="11" width="6" height="3" fill="#000"/>
<rect x="860" y="20" width="6" height="1" fill="#000"/>
<rect x="860" y="21" width="6" height="2" fill="#000"/>
<rect x="860" y="23" width="8" height="2" fill="#000"/>
<rect x="868" y="23" width="6" height="1" fill="#0c0c14"/>
<rect x="860" y="25" width="3" height="1" fill="#000"/>
<rect x="860" y="26" width="7" height="4" fill="#000"/>
<rect x="860" y="30" width="13" height="1" fill="#000"/>
<rect x="860" y="31" width="11" height="3" fill="#000"/>
<rect x="860" y="34" width="8" height="1" fill="#000"/>
<rect x="860" y="35" width="13" height="2" fill="#000"/>
<rect x="873" y="35" width="7" height="1" fill="#0c0c14"/>
<rect x="860" y="37" width="14" height="3" fill="#000"/>
<rect x="874" y="37" width="9" height="1" fill="#0c0c14"/>
<rect x="860" y="40" width="10" height="2" fill="#000"/>
<rect x="870" y="40" width="8" height="1" fill="#0c0c14"/>
<rect x="860" y="42" width="4" height="2" fill="#000"/>
<rect x="860" y="44" width="10" height="3" fill="#000"/>
<rect x="870" y="44" width="3" height="1" fill="#0c0c14"/>
<rect x="860" y="47" width="7" height="3" fill="#000"/>
<rect x="860" y="47" width="20" height="1" fill="#0a0a48"/>
<rect x="860" y="50" width="9" height="2" fill="#000"/>
<rect x="869" y="50" width="8" height="1" fill="#0c0c14"/>
<rect x="860" y="52" width="12" height="3" fill="#000"/>
<rect x="860" y="55" width="14" height="2" fill="#08083a"/>
<rect x="874" y="55" width="6" height="1" fill="#0c0c14"/>
<rect x="860" y="57" width="11" height="4" fill="#000"/>
<rect x="871" y="57" width="5" height="1" fill="#0c0c14"/>
<rect x="860" y="61" width="7" height="1" fill="#000"/>
<rect x="867" y="61" width="6" height="1" fill="#0c0c14"/>
<rect x="860" y="62" width="7" height="4" fill="#000"/>
<rect x="860" y="66" width="11" height="3" fill="#000"/>
<rect x="860" y="69" width="15" height="4" fill="#000"/>
<rect x="875" y="69" width="7" height="1" fill="#0c0c14"/>
<rect x="860" y="73" width="8" height="1" fill="#000"/>
<rect x="860" y="74" width="19" height="1" fill="#000"/>
<rect x="879" y="74" width="5" height="1" fill="#0c0c14"/>
<rect x="860" y="75" width="7" height="2" fill="#000"/>
<rect x="867" y="75" width="9" height="1" fill="#0c0c14"/>
<rect x="860" y="77" width="10" height="3" fill="#000"/>
<rect x="860" y="80" width="6" height="2" fill="#000"/>
<rect x="860" y="82" width="5" height="1" fill="#000"/>
<rect x="860" y="83" width="6" height="2" fill="#000"/>
<rect x="860" y="85" width="9" height="1" fill="#000"/>
<rect x="860" y="86" width="14" height="2" fill="#000"/>
<rect x="860" y="88" width="12" height="1" fill="#000"/>
<rect x="860" y="89" width="14" height="2" fill="#000"/>
<rect x="860" y="89" width="15" height="1" fill="#0a0a48"/>
<rect x="860" y="91" width="13" height="1" fill="#000"/>
<rect x="860" y="92" width="10" height="2" fill="#000"/>
<rect x="860" y="94" width="14" height="2" fill="#000"/>
<rect x="860" y="96" width="6" height="4" fill="#000"/>
<rect x="860" y="100" width="6" height="1" fill="#000"/>
<rect x="866" y="100" width="9" height="1" fill="#0c0c14"/>
<rect x="860" y="101" width="6" height="1" fill="#000"/>
<rect x="866" y="101" width="5" height="1" fill="#0c0c14"/>
<rect x="860" y="102" width="15" height="3" fill="#08083a"/>
<rect x="860" y="105" width="11" height="2" fill="#08083a"/>
<rect x="860" y="107" width="8" height="1" fill="#08083a"/>
<rect x="860" y="108" width="12" height="3" fill="#000"/>
<rect x="860" y="111" width="4" height="1" fill="#000"/>
<rect x="864" y="111" width="5" height="1" fill="#0c0c14"/>
<rect x="860" y="112" width="6" height="2" fill="#000"/>
<rect x="860" y="114" width="9" height="2" fill="#000"/>
<rect x="860" y="116" width="10" height="1" fill="#000"/>
<rect x="860" y="117" width="5" height="2" fill="#000"/>
<rect x="865" y="117" width="5" height="1" fill="#0c0c14"/>
<rect x="860" y="119" width="13" height="3" fill="#08083a"/>
<rect x="873" y="119" width="5" height="1" fill="#0c0c14"/>
<rect x="860" y="122" width="8" height="1" fill="#000"/>
<rect x="860" y="122" width="13" height="1" fill="#0a0a48"/>
<rect x="860" y="123" width="15" height="2" fill="#000"/>
<rect x="860" y="125" width="15" height="1" fill="#08083a"/>
<rect x="860" y="126" width="8" height="2" fill="#000"/>
<rect x="860" y="128" width="12" height="4" fill="#000"/>
<rect x="860" y="132" width="16" height="2" fill="#000"/>
<rect x="876" y="132" width="9" height="1" fill="#0c0c14"/>
<rect x="860" y="134" width="7" height="1" fill="#000"/>
<rect x="860" y="135" width="20" height="2" fill="#08083a"/>
<rect x="860" y="137" width="12" height="2" fill="#000"/>
<rect x="860" y="139" width="6" height="2" fill="#000"/>
<rect x="860" y="141" width="8" height="2" fill="#000"/>
<rect x="860" y="143" width="6" height="2" fill="#000"/>
<rect x="860" y="145" width="15" height="3" fill="#000"/>
<rect x="875" y="145" width="8" height="1" fill="#0c0c14"/>
<rect x="860" y="148" width="14" height="2" fill="#08083a"/>
<rect x="860" y="150" width="14" height="4" fill="#000"/>
<rect x="860" y="154" width="12" height="2" fill="#000"/>
<rect x="860" y="156" width="6" height="2" fill="#000"/>
<rect x="860" y="158" width="14" height="1" fill="#08083a"/>
<rect x="860" y="159" width="15" height="2" fill="#000"/>
<rect x="860" y="161" width="14" height="3" fill="#000"/>
<rect x="860" y="164" width="17" height="1" fill="#08083a"/>
<rect x="877" y="164" width="3" height="1" fill="#0c0c14"/>
<rect x="860" y="165" width="10" height="2" fill="#000"/>
<rect x="870" y="165" width="3" height="1" fill="#0c0c14"/>
<rect x="860" y="167" width="9" height="1" fill="#000"/>
<rect x="860" y="168" width="16" height="3" fill="#000"/>
<rect x="860" y="171" width="13" height="4" fill="#000"/>
<rect x="860" y="175" width="12" height="2" fill="#000"/>
<rect x="860" y="177" width="10" height="2" fill="#000"/>
<rect x="860" y="179" width="6" height="1" fill="#000"/>
<rect x="860" y="180" width="5" height="1" fill="#000"/>
<rect x="860" y="181" width="13" height="2" fill="#000"/>
<rect x="860" y="183" width="18" height="1" fill="#000"/>
<rect x="860" y="184" width="13" height="4" fill="#000"/>
<rect x="860" y="184" width="16" height="1" fill="#0a0a48"/>
<rect x="860" y="188" width="23" height="4" fill="#000"/>
<rect x="860" y="192" width="21" height="4" fill="#000"/>
<rect x="860" y="196" width="19" height="4" fill="#000"/>
<rect x="879" y="196" width="6" height="1" fill="#0c0c14"/>
<rect x="860" y="200" width="24" height="3" fill="#000"/>
<rect x="860" y="203" width="24" height="2" fill="#000"/>
<rect x="860" y="205" width="40" height="1" fill="#08083a"/>
<rect x="860" y="206" width="37" height="3" fill="#000"/>
<rect x="860" y="209" width="40" height="2" fill="#000"/>
<rect x="860" y="211" width="22" height="1" fill="#000"/>
<rect x="860" y="212" width="37" height="4" fill="#000"/>
<rect x="897" y="212" width="4" height="1" fill="#0c0c14"/>
<rect x="860" y="216" width="26" height="1" fill="#000"/>
<rect x="886" y="216" width="8" height="1" fill="#0c0c14"/>
<rect x="860" y="217" width="25" height="1" fill="#08083a"/>
<rect x="860" y="218" width="21" height="2" fill="#000"/>
<rect x="881" y="218" width="8" height="1" fill="#0c0c14"/>
<rect x="860" y="220" width="14" height="4" fill="#000"/>
<rect x="860" y="224" width="10" height="2" fill="#000"/>
<rect x="870" y="224" width="5" height="1" fill="#0c0c14"/>
<rect x="860" y="226" width="13" height="1" fill="#000"/>
<rect x="860" y="227" width="18" height="1" fill="#000"/>
<rect x="860" y="228" width="15" height="2" fill="#000"/>
<rect x="860" y="230" width="7" height="1" fill="#000"/>
<rect x="860" y="231" width="11" height="3" fill="#000"/>
<rect x="860" y="234" width="15" height="1" fill="#000"/>
<rect x="860" y="235" width="10" height="1" fill="#000"/>
<rect x="860" y="236" width="6" height="2" fill="#000"/>
<rect x="860" y="238" width="6" height="3" fill="#000"/>
<rect x="866" y="238" width="8" height="1" fill="#0c0c14"/>
<rect x="860" y="241" width="11" height="4" fill="#000"/>
<rect x="871" y="241" width="6" height="1" fill="#0c0c14"/>
<rect x="860" y="245" width="11" height="2" fill="#000"/>
<rect x="860" y="247" width="7" height="1" fill="#000"/>
<rect x="867" y="247" width="7" height="1" fill="#0c0c14"/>
<rect x="860" y="248" width="6" height="1" fill="#000"/>
<rect x="860" y="249" width="3" height="4" fill="#000"/>
<rect x="863" y="249" width="3" height="1" fill="#0c0c14"/>
<rect x="860" y="253" width="16" height="1" fill="#000"/>
<rect x="860" y="253" width="12" height="1" fill="#0a0a48"/>
<rect x="860" y="254" width="8" height="2" fill="#000"/>
<rect x="860" y="256" width="4" height="1" fill="#000"/>
<rect x="860" y="257" width="16" height="4" fill="#000"/>
<rect x="860" y="257" width="13" height="1" fill="#0a0a48"/>
<rect x="860" y="261" width="8" height="1" fill="#000"/>
<rect x="868" y="261" width="7" height="1" fill="#0c0c14"/>
<rect x="860" y="262" width="14" height="2" fill="#000"/>
<rect x="860" y="264" width="11" height="1" fill="#000"/>
<rect x="871" y="264" width="3" height="1" fill="#0c0c14"/>
<rect x="860" y="265" width="12" height="1" fill="#000"/>
<rect x="872" y="265" width="7" height="1" fill="#0c0c14"/>
<rect x="860" y="266" width="15" height="2" fill="#000"/>
<rect x="860" y="268" width="6" height="3" fill="#000"/>
<rect x="860" y="271" width="11" height="1" fill="#000"/>
<rect x="860" y="272" width="15" height="1" fill="#000"/>
<rect x="860" y="273" width="19" height="1" fill="#08083a"/>
<rect x="860" y="274" width="16" height="1" fill="#000"/>
<rect x="860" y="275" width="13" height="3" fill="#08083a"/>
<rect x="860" y="278" width="13" height="1" fill="#08083a"/>
<rect x="873" y="278" width="6" height="1" fill="#0c0c14"/>
<rect x="860" y="279" width="9" height="3" fill="#000"/>
<rect x="860" y="282" width="7" height="2" fill="#000"/>
<rect x="867" y="282" width="9" height="1" fill="#0c0c14"/>
<rect x="860" y="284" width="8" height="3" fill="#000"/>
<rect x="860" y="287" width="16" height="2" fill="#000"/>
<rect x="860" y="289" width="5" height="1" fill="#000"/>
<rect x="860" y="290" width="10" height="2" fill="#000"/>
<rect x="860" y="292" width="11" height="2" fill="#000"/>
<rect x="860" y="294" width="10" height="4" fill="#000"/>
<rect x="860" y="298" width="9" height="2" fill="#000"/>
<rect x="869" y="298" width="7" height="1" fill="#0c0c14"/>
<rect x="860" y="300" width="5" height="1" fill="#000"/>
<rect x="860" y="301" width="4" height="2" fill="#000"/>
<rect x="860" y="303" width="14" height="2" fill="#000"/>
<rect x="860" y="305" width="11" height="4" fill="#000"/>
<rect x="871" y="305" width="7" height="1" fill="#0c0c14"/>
<rect x="860" y="309" width="7" height="4" fill="#000"/>
<rect x="867" y="309" width="6" height="1" fill="#0c0c14"/>
<rect x="860" y="313" width="18" height="2" fill="#000"/>
<rect x="878" y="313" width="3" height="1" fill="#0c0c14"/>
<rect x="860" y="315" width="8" height="2" fill="#000"/>
<rect x="860" y="317" width="21" height="2" fill="#000"/>
<rect x="881" y="317" width="8" height="1" fill="#0c0c14"/>
<rect x="860" y="319" width="16" height="1" fill="#000"/>
<rect x="860" y="320" width="8" height="1" fill="#000"/>
<rect x="868" y="320" width="6" height="1" fill="#0c0c14"/>
<rect x="860" y="321" width="8" height="3" fill="#000"/>
<rect x="868" y="321" width="9" height="1" fill="#0c0c14"/>
<rect x="860" y="324" width="13" height="2" fill="#000"/>
<rect x="860" y="326" width="13" height="2" fill="#000"/>
<rect x="860" y="328" width="12" height="2" fill="#000"/>
<rect x="872" y="328" width="5" height="1" fill="#0c0c14"/>
<rect x="860" y="330" width="12" height="4" fill="#000"/>
<rect x="860" y="334" width="16" height="1" fill="#08083a"/>
<rect x="860" y="335" width="5" height="1" fill="#000"/>
<rect x="860" y="336" width="15" height="1" fill="#08083a"/>
<rect x="875" y="336" width="8" height="1" fill="#0c0c14"/>
<rect x="860" y="337" width="10" height="3" fill="#000"/>
<rect x="870" y="337" width="7" height="1" fill="#0c0c14"/>
<rect x="860" y="340" width="9" height="1" fill="#000"/>
<rect x="869" y="340" width="3" height="1" fill="#0c0c14"/>
<rect x="860" y="341" width="14" height="1" fill="#000"/>
<rect x="860" y="342" width="12" height="2" fill="#000"/>
<rect x="860" y="344" width="17" height="1" fill="#08083a"/>
<rect x="860" y="345" width="17" height="3" fill="#000"/>
<rect x="877" y="345" width="6" height="1" fill="#0c0c14"/>
<rect x="860" y="348" width="15" height="2" fill="#08083a"/>
<rect x="860" y="350" width="11" height="3" fill="#000"/>
<rect x="860" y="353" width="6" height="1" fill="#000"/>
<rect x="860" y="354" width="6" height="4" fill="#000"/>
<rect x="866" y="354" width="5" height="1" fill="#0c0c14"/>
<rect x="860" y="358" width="19" height="4" fill="#000"/>
<rect x="879" y="358" width="4" height="1" fill="#0c0c14"/>
<rect x="860" y="362" width="12" height="1" fill="#000"/>
<rect x="872" y="362" width="6" height="1" fill="#0c0c14"/>
<rect x="860" y="363" width="13" height="4" fill="#08083a"/>
<rect x="873" y="363" width="3" height="1" fill="#0c0c14"/>
<rect x="860" y="367" width="17" height="1" fill="#08083a"/>
<rect x="860" y="368" width="13" height="3" fill="#000"/>
<rect x="860" y="371" width="7" height="2" fill="#000"/>
<rect x="860" y="373" width="9" height="3" fill="#000"/>
<rect x="860" y="376" width="6" height="1" fill="#000"/>
<rect x="860" y="377" width="5" height="4" fill="#000"/>
<rect x="865" y="377" width="9" height="1" fill="#0c0c14"/>
<rect x="860" y="381" width="14" height="3" fill="#000"/>
<rect x="874" y="381" width="5" height="1" fill="#0c0c14"/>
<rect x="860" y="384" width="6" height="2" fill="#000"/>
<rect x="860" y="386" width="4" height="4" fill="#000"/>
<rect x="860" y="386" width="15" height="1" fill="#0a0a48"/>
<rect x="860" y="390" width="10" height="1" fill="#000"/>
<rect x="860" y="391" width="13" height="1" fill="#000"/>
<rect x="860" y="392" width="10" height="2" fill="#000"/>
<rect x="860" y="394" width="9" height="4" fill="#000"/>
<rect x="860" y="398" width="7" height="2" fill="#000"/>
<rect x="860" y="400" width="13" height="1" fill="#000"/>
<rect x="860" y="400" width="18" height="1" fill="#0a0a48"/>
<rect x="860" y="401" width="6" height="1" fill="#000"/>
<rect x="866" y="401" width="5" height="1" fill="#0c0c14"/>
<rect x="860" y="402" width="6" height="3" fill="#000"/>
<rect x="860" y="402" width="16" height="1" fill="#0a0a48"/>
<rect x="860" y="405" width="11" height="1" fill="#000"/>
<rect x="860" y="406" width="7" height="3" fill="#000"/>
<rect x="860" y="409" width="12" height="3" fill="#000"/>
<rect x="860" y="412" width="15" height="3" fill="#000"/>
<rect x="875" y="412" width="7" height="1" fill="#0c0c14"/>
<rect x="860" y="415" width="19" height="1" fill="#08083a"/>
<rect x="879" y="415" width="7" height="1" fill="#0c0c14"/>
<rect x="860" y="416" width="6" height="1" fill="#000"/>
<rect x="860" y="417" width="14" height="1" fill="#000"/>
<rect x="860" y="418" width="12" height="2" fill="#000"/>
<rect x="860" y="420" width="5" height="2" fill="#000"/>
<rect x="865" y="420" width="7" height="1" fill="#0c0c14"/>
<rect x="860" y="422" width="7" height="1" fill="#000"/>
<rect x="867" y="422" width="4" height="1" fill="#0c0c14"/>
<rect x="860" y="423" width="2" height="2" fill="#000"/>
<rect x="860" y="425" width="13" height="2" fill="#000"/>
<rect x="860" y="427" width="9" height="4" fill="#000"/>
<rect x="869" y="427" width="9" height="1" fill="#0c0c14"/>
<rect x="860" y="431" width="15" height="2" fill="#000"/>
<rect x="860" y="433" width="5" height="2" fill="#000"/>
<rect x="860" y="435" width="9" height="1" fill="#000"/>
<rect x="860" y="436" width="5" height="1" fill="#000"/>
<rect x="860" y="437" width="17" height="1" fill="#08083a"/>
<rect x="877" y="437" width="5" height="1" fill="#0c0c14"/>
<rect x="860" y="438" width="8" height="4" fill="#000"/>
<rect x="860" y="442" width="3" height="2" fill="#000"/>
<rect x="863" y="442" width="6" height="1" fill="#0c0c14"/>
<rect x="860" y="444" width="10" height="3" fill="#000"/>
<rect x="860" y="447" width="12" height="1" fill="#000"/>
<rect x="872" y="447" width="5" height="1" fill="#0c0c14"/>
<rect x="860" y="448" width="17" height="3" fill="#08083a"/>
<rect x="860" y="451" width="9" height="1" fill="#000"/>
<rect x="860" y="452" width="3" height="4" fill="#000"/>
<rect x="863" y="452" width="7" height="1" fill="#0c0c14"/>
<rect x="860" y="456" width="4" height="2" fill="#000"/>
<rect x="860" y="456" width="19" height="1" fill="#0a0a48"/>
<rect x="860" y="458" width="15" height="3" fill="#000"/>
<rect x="875" y="458" width="5" height="1" fill="#0c0c14"/>
<rect x="860" y="461" width="6" height="1" fill="#000"/>
<rect x="860" y="462" width="4" height="1" fill="#000"/>
<rect x="860" y="463" width="9" height="1" fill="#000"/>
<rect x="869" y="463" width="4" height="1" fill="#0c0c14"/>
<rect x="860" y="464" width="13" height="2" fill="#000"/>
<rect x="860" y="464" width="20" height="1" fill="#0a0a48"/>
<rect x="860" y="466" width="8" height="3" fill="#000"/>
<rect x="860" y="469" width="12" height="2" fill="#000"/>
<rect x="860" y="471" width="15" height="4" fill="#000"/>
<rect x="860" y="475" width="10" height="2" fill="#000"/>
<rect x="860" y="477" width="10" height="1" fill="#08083a"/>
<rect x="870" y="477" width="3" height="1" fill="#0c0c14"/>
<rect x="860" y="478" width="20" height="2" fill="#08083a"/>
<rect x="860" y="480" width="11" height="3" fill="#000"/>
<rect x="860" y="480" width="20" height="1" fill="#0a0a48"/>
<rect x="860" y="483" width="10" height="1" fill="#000"/>
<rect x="860" y="484" width="7" height="2" fill="#000"/>
<rect x="867" y="484" width="7" height="1" fill="#0c0c14"/>
<rect x="860" y="486" width="9" height="2" fill="#000"/>
<rect x="869" y="486" width="4" height="1" fill="#0c0c14"/>
<rect x="860" y="488" width="14" height="2" fill="#000"/>
<rect x="874" y="488" width="9" height="1" fill="#0c0c14"/>
<rect x="860" y="490" width="10" height="4" fill="#000"/>
<rect x="860" y="494" width="10" height="1" fill="#000"/>
<rect x="860" y="495" width="9" height="1" fill="#000"/>
<rect x="860" y="496" width="8" height="4" fill="#000"/>
<rect x="860" y="500" width="10" height="1" fill="#000"/>
<rect x="860" y="501" width="11" height="4" fill="#000"/>
<rect x="871" y="501" width="7" height="1" fill="#0c0c14"/>
<rect x="860" y="505" width="10" height="1" fill="#000"/>
<rect x="860" y="506" width="10" height="4" fill="#000"/>
<rect x="870" y="506" width="7" height="1" fill="#0c0c14"/>
<rect x="860" y="510" width="13" height="2" fill="#000"/>
<rect x="860" y="516" width="14" height="4" fill="#000"/>
<rect x="874" y="516" width="9" height="1" fill="#0c0c14"/>
<rect x="860" y="520" width="5" height="1" fill="#000"/>
<rect x="865" y="520" width="3" height="1" fill="#0c0c14"/>
<rect x="860" y="521" width="17" height="2" fill="#000"/>
<rect x="877" y="521" width="4" height="1" fill="#0c0c14"/>
<rect x="860" y="523" width="10" height="2" fill="#000"/>
<rect x="860" y="525" width="4" height="1" fill="#000"/>
<rect x="860" y="526" width="14" height="1" fill="#000"/>
<rect x="874" y="526" width="5" height="1" fill="#0c0c14"/>
<rect x="860" y="527" width="14" height="2" fill="#08083a"/>
<rect x="874" y="527" width="9" height="1" fill="#0c0c14"/>
<rect x="860" y="529" width="15" height="1" fill="#000"/>
<rect x="860" y="530" width="13" height="4" fill="#000"/>
<rect x="860" y="534" width="7" height="3" fill="#000"/>
<rect x="860" y="537" width="20" height="4" fill="#08083a"/>
<rect x="860" y="537" width="12" height="1" fill="#0a0a48"/>
<rect x="860" y="541" width="12" height="4" fill="#000"/>
<rect x="860" y="545" width="4" height="2" fill="#000"/>
<rect x="864" y="545" width="4" height="1" fill="#0c0c14"/>
<rect x="860" y="547" width="8" height="1" fill="#000"/>
<rect x="860" y="548" width="13" height="4" fill="#000"/>
<rect x="860" y="552" width="14" height="3" fill="#000"/>
<rect x="874" y="552" width="9" height="1" fill="#0c0c14"/>
<rect x="860" y="555" width="6" height="1" fill="#000"/>
<rect x="860" y="556" width="8" height="1" fill="#000"/>
<rect x="868" y="556" width="8" height="1" fill="#0c0c14"/>
<rect x="860" y="557" width="7" height="2" fill="#000"/>
<rect x="860" y="559" width="12" height="2" fill="#000"/>
<rect x="860" y="561" width="3" height="3" fill="#000"/>
<rect x="863" y="561" width="3" height="1" fill="#0c0c14"/>
<rect x="860" y="564" width="8" height="4" fill="#000"/>
<rect x="860" y="568" width="12" height="4" fill="#000"/>
<rect x="872" y="568" width="9" height="1" fill="#0c0c14"/>
<rect x="860" y="572" width="4" height="1" fill="#000"/>
<rect x="860" y="573" width="12" height="1" fill="#000"/>
<rect x="860" y="574" width="11" height="2" fill="#08083a"/>
<rect x="860" y="574" width="18" height="1" fill="#0a0a48"/>
<rect x="860" y="576" width="16" height="2" fill="#08083a"/>
<rect x="860" y="578" width="14" height="1" fill="#000"/>
<rect x="860" y="579" width="8" height="2" fill="#000"/>
<rect x="860" y="581" width="21" height="2" fill="#08083a"/>
<rect x="860" y="581" width="13" height="1" fill="#0a0a48"/>
<rect x="860" y="583" width="17" height="4" fill="#000"/>
<rect x="860" y="583" width="20" height="1" fill="#0a0a48"/>
<rect x="860" y="587" width="12" height="1" fill="#000"/>
<rect x="860" y="588" width="8" height="1" fill="#000"/>
<rect x="860" y="589" width="12" height="2" fill="#000"/>
<rect x="860" y="591" width="6" height="3" fill="#000"/>
<rect x="860" y="594" width="13" height="1" fill="#000"/>
<rect x="860" y="594" width="12" height="1" fill="#0a0a48"/>
<rect x="860" y="595" width="9" height="3" fill="#000"/>
<rect x="860" y="598" width="14" height="2" fill="#000"/>
<rect x="860" y="600" width="5" height="1" fill="#000"/>
<rect x="860" y="601" width="6" height="1" fill="#000"/>
<rect x="860" y="602" width="5" height="1" fill="#000"/>
<rect x="865" y="602" width="8" height="1" fill="#0c0c14"/>
<rect x="860" y="603" width="15" height="4" fill="#000"/>
<rect x="860" y="607" width="11" height="1" fill="#000"/>
<rect x="860" y="607" width="14" height="1" fill="#0a0a48"/>
<rect x="860" y="608" width="14" height="3" fill="#000"/>
<rect x="874" y="608" width="7" height="1" fill="#0c0c14"/>
<rect x="860" y="611" width="1" height="3" fill="#000"/>
<rect x="860" y="614" width="10" height="4" fill="#000"/>
<rect x="860" y="618" width="10" height="3" fill="#000"/>
<rect x="860" y="621" width="15" height="1" fill="#000"/>
<rect x="860" y="622" width="7" height="1" fill="#000"/>
<rect x="860" y="623" width="12" height="2" fill="#000"/>
<rect x="860" y="625" width="16" height="2" fill="#000"/>
<rect x="876" y="625" width="6" height="1" fill="#0c0c14"/>
<rect x="860" y="627" width="15" height="1" fill="#08083a"/>
<rect x="860" y="628" width="9" height="4" fill="#000"/>
<rect x="860" y="632" width="11" height="2" fill="#000"/>
<rect x="871" y="632" width="8" height="1" fill="#0c0c14"/>
<rect x="860" y="634" width="13" height="2" fill="#000"/>
<rect x="860" y="636" width="14" height="1" fill="#08083a"/>
<rect x="860" y="637" width="8" height="4" fill="#000"/>
<rect x="860" y="641" width="20" height="1" fill="#0a0a48"/>
<rect x="860" y="644" width="14" height="1" fill="#000"/>
<rect x="860" y="645" width="11" height="2" fill="#000"/>
<rect x="860" y="647" width="7" height="2" fill="#000"/>
<rect x="867" y="647" width="8" height="1" fill="#0c0c14"/>
<rect x="860" y="649" width="3" height="4" fill="#000"/>
<rect x="860" y="653" width="4" height="4" fill="#000"/>
<rect x="860" y="657" width="13" height="3" fill="#000"/>
<rect x="860" y="660" width="9" height="1" fill="#000"/>
<rect x="860" y="661" width="4" height="2" fill="#000"/>
<rect x="860" y="663" width="6" height="4" fill="#000"/>
<rect x="860" y="667" width="6" height="1" fill="#000"/>
<rect x="866" y="667" width="8" height="1" fill="#0c0c14"/>
<rect x="860" y="668" width="7" height="1" fill="#000"/>
<rect x="867" y="668" width="8" height="1" fill="#0c0c14"/>
<rect x="860" y="669" width="7" height="1" fill="#000"/>
<rect x="860" y="670" width="17" height="2" fill="#08083a"/>
<rect x="860" y="672" width="10" height="4" fill="#08083a"/>
<rect x="870" y="672" width="3" height="1" fill="#0c0c14"/>
<rect x="860" y="676" width="9" height="1" fill="#08083a"/>
<rect x="860" y="677" width="15" height="1" fill="#000"/>
<rect x="860" y="678" width="2" height="2" fill="#000"/>
<rect x="862" y="678" width="5" height="1" fill="#0c0c14"/>
<rect x="860" y="680" width="6" height="2" fill="#000"/>
<rect x="866" y="680" width="4" height="1" fill="#0c0c14"/>
<rect x="860" y="682" width="9" height="3" fill="#000"/>
<rect x="860" y="685" width="12" height="2" fill="#000"/>
<rect x="860" y="687" width="10" height="1" fill="#000"/>
<rect x="860" y="688" width="14" height="1" fill="#000"/>
<rect x="860" y="689" width="18" height="2" fill="#000"/>
<rect x="860" y="689" width="15" height="1" fill="#0a0a48"/>
<rect x="860" y="691" width="10" height="3" fill="#000"/>
<rect x="860" y="694" width="12" height="1" fill="#000"/>
<rect x="872" y="694" width="3" height="1" fill="#0c0c14"/>
<rect x="860" y="695" width="6" height="4" fill="#000"/>
<rect x="860" y="699" width="9" height="2" fill="#000"/>
<rect x="860" y="701" width="9" height="1" fill="#000"/>
<rect x="860" y="702" width="5" height="4" fill="#000"/>
<rect x="860" y="706" width="7" height="1" fill="#000"/>
<rect x="860" y="707" width="6" height="1" fill="#000"/>
<rect x="866" y="707" width="3" height="1" fill="#0c0c14"/>
<rect x="860" y="708" width="8" height="2" fill="#000"/>
<rect x="868" y="708" width="9" height="1" fill="#0c0c14"/>
<rect x="860" y="710" width="8" height="1" fill="#000"/>
<rect x="868" y="710" width="3" height="1" fill="#0c0c14"/>
<rect x="860" y="711" width="14" height="2" fill="#000"/>
<rect x="860" y="713" width="5" height="4" fill="#000"/>
<rect x="865" y="713" width="8" height="1" fill="#0c0c14"/>
<rect x="860" y="717" width="11" height="4" fill="#000"/>
<rect x="871" y="717" width="9" height="1" fill="#0c0c14"/>
<rect x="860" y="721" width="4" height="1" fill="#000"/>
<rect x="864" y="721" width="8" height="1" fill="#0c0c14"/>
<rect x="860" y="722" width="14" height="3" fill="#000"/>
<rect x="874" y="722" width="6" height="1" fill="#0c0c14"/>
<rect x="860" y="725" width="7" height="2" fill="#000"/>
<rect x="860" y="727" width="7" height="3" fill="#000"/>
<rect x="860" y="730" width="5" height="2" fill="#000"/>
<rect x="865" y="730" width="5" height="1" fill="#0c0c14"/>
<rect x="860" y="732" width="13" height="1" fill="#000"/>
<rect x="860" y="733" width="11" height="1" fill="#000"/>
<rect x="871" y="733" width="6" height="1" fill="#0c0c14"/>
<rect x="860" y="734" width="7" height="2" fill="#000"/>
<rect x="867" y="734" width="8" height="1" fill="#0c0c14"/>
<rect x="860" y="736" width="13" height="4" fill="#000"/>
<rect x="860" y="740" width="9" height="3" fill="#000"/>
<rect x="860" y="743" width="8" height="1" fill="#000"/>
<rect x="860" y="744" width="15" height="4" fill="#08083a"/>
<rect x="875" y="744" width="8" height="1" fill="#0c0c14"/>
<rect x="860" y="748" width="11" height="2" fill="#000"/>
<rect x="871" y="748" width="3" height="1" fill="#0c0c14"/>
<rect x="860" y="750" width="13" height="2" fill="#000"/>
<rect x="860" y="752" width="9" height="2" fill="#000"/>
<rect x="869" y="752" width="9" height="1" fill="#0c0c14"/>
<rect x="860" y="754" width="9" height="2" fill="#000"/>
<rect x="860" y="756" width="15" height="1" fill="#000"/>
<rect x="860" y="757" width="13" height="4" fill="#000"/>
<rect x="860" y="761" width="3" height="1" fill="#000"/>
<rect x="860" y="762" width="3" height="1" fill="#000"/>
<rect x="860" y="763" width="5" height="2" fill="#000"/>
<rect x="860" y="765" width="10" height="1" fill="#000"/>
<rect x="860" y="766" width="8" height="4" fill="#000"/>
<rect x="860" y="770" width="7" height="4" fill="#000"/>
<rect x="867" y="770" width="8" height="1" fill="#0c0c14"/>
<rect x="860" y="63" width="25" height="1" fill="#0a0a48"/>
<path d="M860 70 L880 70 L882 73 L879 78 L860 78 Z" fill="#0a0a48"/>
<rect x="860" y="199" width="33" height="3" fill="#400a80"/>
<rect x="860" y="196" width="22" height="3" fill="#0a0a48"/>
<rect x="860" y="28" width="80" height="1" fill="#a0a0a0"/>
<rect x="860" y="106" width="80" height="1" fill="#a0a0a0"/>
<rect x="860" y="184" width="80" height="1" fill="#a0a0a0"/>
<rect x="860" y="262" width="80" height="1" fill="#a0a0a0"/>
<rect x="860" y="340" width="80" height="1" fill="#a0a0a0"/>
<rect x="860" y="418" width="80" height="1" fill="#a0a0a0"/>
<rect x="860" y="496" width="80" height="1" fill="#a0a0a0"/>
<rect x="860" y="574" width="80" height="1" fill="#a0a0a0"/>
<rect x="860" y="652" width="80" height="1" fill="#a0a0a0"/>
<rect x="860" y="730" width="80" height="1" fill="#a0a0a0"/>
<svg x="860" y="1" width="80" height="781" viewBox="860 1 80 781" overflow="hidden">
<polyline points="861,6 866,8 874,11.5 879,15 883,18 889,19 891,21 887,23 893,30 896,32 892,34 894,37 891.78,40 890.1,43.92 894.27,45.95 889.48,48.23 894.11,51.3 890.95,53.51 894.04,56.67 891.58,59.25 896.82,62.75 890.83,65.37 896.22,69.11 893.98,71.1 896.36,73.62 893.2,76.12 895.69,78.93 894.82,81.83 897.81,84.79 896.19,86.98 899.8,90.23 896.17,92.97 900.35,94.68 895.95,97.68 898.42,101 898.64,103 900.12,104.9 897.98,106.86 902.06,109.72 897.97,111.81 903.72,115.27 898.76,119.04 904.71,121.98 900.25,125.66 905.23,128.4 901.59,129.98 906.46,132.65 902.7,134.67 906.29,136.93 900.76,140.57 908.8,142.19 903.92,144.46 908.69,146.87 905.29,150.62 914.69,154.27 909.74,157.1 917.3,160.79 913.09,162.7 916.61,164.72 913.25,167.13 921.19,169.11 914.33,172.02 919.97,175.58 916.6,177.27 922.79,179.2 920.5,182.99 927.22,185.95 925.84,189.15 931.3,191.64 930.35,194.69 938.89,197.38 938.97,200.5 942.58,202.1 943.61,204.91 944.77,208.64 944.29,210.5 945.6,214.18 940.62,216.09 937.76,219.09 931.92,222.24 929.35,225.05 924.53,227.25 921.15,229.34 916.2,232.4 917,235.2 919.69,238.67 920.84,240.62 915.25,243.48 914.27,246.09 909.24,249.23 908.58,251.17 904.51,255.17 906.26,259.1 905.21,261.04 905.75,263.56 903.55,265.32 905.61,267.27 902.28,269.12 903.64,271.56 901.76,274.53 903.95,278.18 902.21,280.19 905.47,283.3 903.47,286.54 906.56,289.06 905.37,290.59 905.81,293.22 902.11,295.25 901.66,297.42 898.16,301.09 898.71,305.08 896.07,308.23 899.43,310.69 897.21,312.72 898.54,314.84 896.62,318 899.44,319.74 895.09,322.09 899.25,323.95 895.95,327.6 899.36,329.71 894.39,331.84 896.32,333.75 892.88,336.66 894.05,339.94 892.24,342.1 893.36,343.72 890.04,347.25 891.86,349.87 887.66,352.87 889.54,356.05 884.8,359.48 887.86,361.13 885.8,364 885.92,365.91 884.47,368.74 888.48,372.69 883.09,375.08 888.1,378.36 884.82,381.7 887.37,384.01 884.99,386.05 888.11,389.93 884.92,392.81 887.94,396.61 885.05,398.14 888.37,400.3 886.32,403.94 888.45,406.6 886.48,409.1 885.29,411.88 884.54,415.49 885.22,418.83 884.98,422.23 887.13,425.81 882.87,428.79 887.23,430.69 885.66,433.9 886.09,435.97 884.21,438.66 885.91,440.93 883.92,443.34 887.02,446.03 882.96,449.75 886.45,453.43 883.71,457.04 886.4,459.47 883.73,462.52 886.89,465.58 883.56,469.22 885.36,471.61 882.89,475.26 885.74,478.58 882.42,482.36 885.18,485.29 884.52,489.15 885.98,490.7 883.79,493.75 885.92,496.14 883.54,498.87 887.92,501.62 882.74,504.13 885.49,507.97 884.82,511.57 886.24,514.04 883.23,515.9 888.44,517.81 883.65,519.42 886.64,523.3 883.06,526.76 886.96,529.64 884.04,531.45 887.55,533.33 884.61,536.74 886.04,540.28 882.05,542.65 886.66,546.2 884.24,548.47 886.65,550.18 883.27,552.53 886.17,554.47 883.87,557.92 884.82,561.51 884.62,564.6 886.19,567.7 883.68,570.32 887.93,573.7 882.76,577.63 886.21,579.33 883.58,582.02 886.95,585.26 883.79,588.08 885.28,591.64 882.21,594.76 886.62,598.44 882.34,601.64 888.39,605.34 882.82,607.55 886.71,611.12 882.71,614.34 886.96,618.01 882.63,621.35 885.8,624.15 883.63,625.71 884.58,627.34 882.38,629.67 885.12,633.03 882.77,635.6 886.49,637.6 884.31,641.24 886.03,645.04 884.2,647.02 886.76,649.48 883.66,651.52 884.54,654.43 882.83,657.81 887.83,660.56 883.54,664.18 884.1,666.87 881.66,669.39 887.06,672.25 883.23,675.05 885.74,678.26 882.43,681.15 885.33,682.73 884.21,686.24 885.2,688.79 883.49,691.34 885.85,693.72 883.15,697.57 886.21,700.4 883.1,702.07 887.17,704.75 883.56,707.09 884.93,710.77 884.68,713.78 886.48,716.48 883.01,719.7 886.42,721.98 884.62,725.23 886.61,727 885.89,730.56 886.69,733.82 885.66,736.2 886.72,738.1 884.57,741.65 886,743 883,748 888,752.5 884,758 883,763 880,770 875,774 868,777 862,781" fill="none" stroke="#22e022" stroke-width="1" shape-rendering="geometricPrecision"/>
<polyline points="860.5,3 860.5,16 862,17 866,20 868,25 871,28 872,33 870,36 869,40 869.26,42 869.74,45.56 870.31,48.61 868.56,51.99 870.55,55.13 870.61,58.42 868.7,60.61 869.87,63.31 868.41,65.72 869.63,69.16 871.2,71.53 870.4,73.57 870.66,77.37 869.22,80.31 868.98,83.62 870.1,87.52 869.87,90.3 868.84,94.23 868.93,97.68 869.24,100.19 870.39,103.54 870.07,106.1 868.66,109.74 869.56,112.59 871.07,116.12 869.66,119.75 870.77,123.54 871.23,126.61 869.51,128.76 870.48,132.25 871.12,136.16 869.78,139.46 871.33,142.3 869.25,144.82 868.76,146.85 869.43,150.52 871.35,153.27 871.14,155.75 871.05,158.45 870.1,162.35 869.46,166.15 870.8,168.69 871.85,172.18 872.53,175.11 873.17,177.2 872.96,179.63 874.48,183.48 874.95,186.63 875.34,189.49 870,170 875,190 890,204 912,208 893,211 890,215 880,219 875,222 872,230 870,250 870.73,232 871.56,235.59 869.78,239.24 871.53,241.59 869.46,244.62 870.33,248.02 869.26,250.52 871.55,253.79 869.3,256.49 870.76,259.78 870.03,263.13 869.69,266.76 871.67,270.44 870.58,274.37 871.05,276.82 871.32,278.88 871.76,281.46 871.98,283.54 870.17,286.41 872.27,289.57 870.68,293.3 869.79,296.3 870.06,299.47 870.9,301.63 870.58,303.76 871.97,306.83 871.53,309.46 870.49,312.07 870.79,314.7 871.11,316.85 870.75,320.64 871.15,323.85 869.65,326.95 870.37,328.99 869.6,332.74 869.93,335.9 869.94,337.91 869.59,341.27 871.73,344.19 870.7,347.49 871.15,351.29 870.09,353.73 870.17,357.4 871.74,360.09 870.66,363.24 869.61,365.62 871.4,368.47 869.79,372.03 869.95,374.82 870.71,378.56 871.74,381.57 869.51,384.79 869.66,388.34 871.1,391.51 872.06,395.23 870.86,398.53 870.37,400.76 870.62,404.44 870.71,408 870.96,410.4 872.17,414.23 870.1,417.39 870.68,421.38 870.33,424.07 869.61,426.56 870.69,429.34 871.64,433.11 872.37,436.19 871.07,438.61 869.56,442.55 869.95,444.9 870.96,447.24 872.46,450.48 872.34,453.21 869.77,455.61 872,458.91 870.48,462.16 872.23,465.19 872.25,467.83 870.22,471.06 871.31,473.4 871.22,476.67 870.75,479.18 870.85,482.57 871.48,484.72 872.19,487.11 871.09,489.83 871.21,493.34 871.05,495.62 870.91,499.57 872.18,501.74 870.47,505.02 870.14,508.9 870.4,512.31 870.15,514.73 871.75,517.89 872.27,520.56 870.93,523.65 871.13,526.9 872.25,530.42 869.6,534.14 870.06,537.72 869.65,541.18 870.6,543.55 871.46,545.93 871.35,549.13 869.69,553.03 869.88,556.12 870.72,558.71 871.63,562.24 871.69,565.29 870.28,568.09 871.88,570.99 870.58,574.5 870.34,577.26 870.56,579.86 871.77,581.89 869.64,584.33 869.05,588.08 869.4,591.05 869.26,593.41 869.77,595.79 871.33,599.51 869.41,602.82 869.26,605.5 870.93,608.2 870.81,610.87 868.54,613.86 869.84,616.72 869.24,620.1 869.07,622.71 868.62,626.26 870.15,629.89 869.68,633.24 870.53,636.65 870.88,639.98 870.09,643.93 869.18,645.96 870.02,648.27 870.44,650.67 870.58,654.24 870.09,656.74 870.48,660.65 868.58,663.47 870.44,667.13 870.94,670.08 869.03,673.95 870.37,676.79 869.95,678.83 869.31,682.55 870.55,685.72 870.99,689.31 870.75,692.64 869.22,694.82 870.26,698.59 869.63,701.1 869.62,703.99 870.04,706.14 868.67,708.91 869.03,712.57 871.44,714.72 869.18,718.37 871.09,722.13 870.81,724.52 870.93,726.72 869.24,729.46 869.74,733.32 869.67,736.56 870.98,740.3 870.2,744.11 869.88,747.78 870.28,751.78 870.13,754.06 869.28,757.51 870,760 869,765 866,768 862,773 860,781" fill="none" stroke="#c03030" stroke-width="1.3" shape-rendering="geometricPrecision"/>
<circle cx="939" cy="65.5" r="2.5" fill="#000" stroke="#d02020" stroke-width="1" shape-rendering="geometricPrecision"/>
</svg>
</svg></body></html>
